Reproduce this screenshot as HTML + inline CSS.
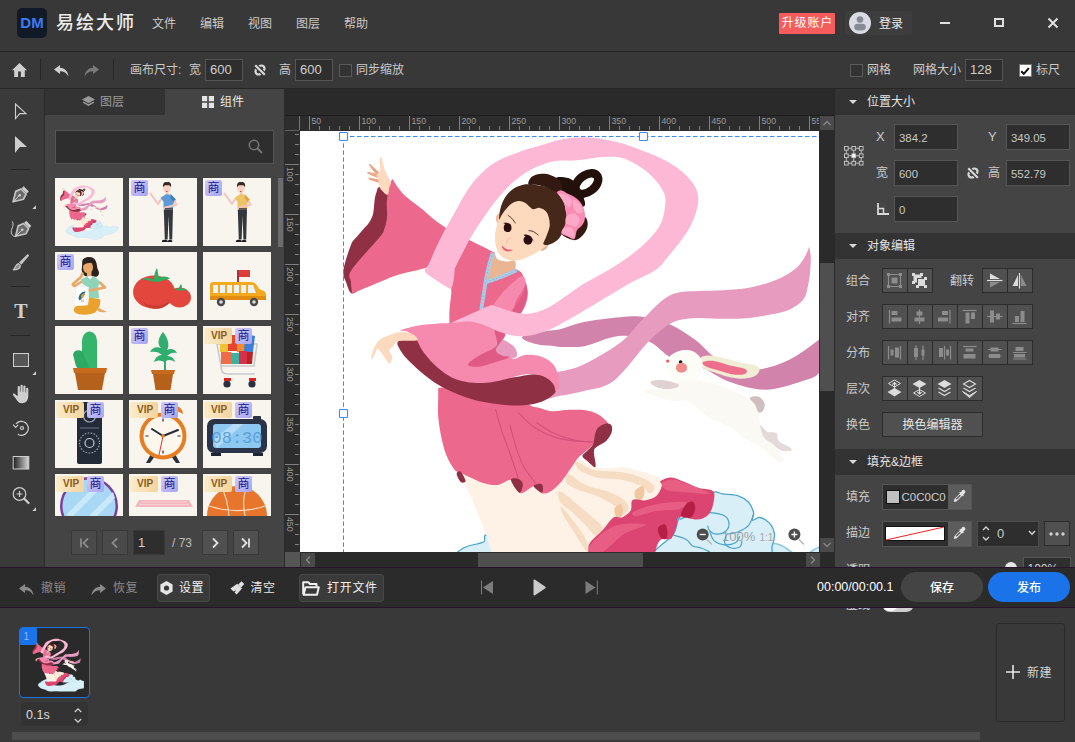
<!DOCTYPE html>
<html lang="zh-CN">
<head>
<meta charset="utf-8">
<title>易绘大师</title>
<style>
*{box-sizing:border-box;margin:0;padding:0}
html,body{width:1075px;height:742px;overflow:hidden;background:#383838}
body{position:relative;font-family:"Liberation Sans","Noto Sans CJK SC",sans-serif;font-size:12px;color:#cacaca;line-height:1}
.abs{position:absolute}
.t{position:absolute;white-space:nowrap;line-height:16px;height:16px}
svg{position:absolute;overflow:visible}
#titlebar{left:0;top:0;width:1075px;height:52px;background:#383838;border-bottom:1px solid #262626}
#toolbar{left:0;top:52px;width:1075px;height:37px;background:#383838;border-bottom:1px solid #262626}
#lefttools{left:0;top:89px;width:45px;height:478px;background:#3a3a3a;border-right:1px solid #2a2a2a}
#panel{left:45px;top:89px;width:240px;height:478px;background:#444}
#canvasarea{left:285px;top:89px;width:550px;height:478px;background:#2a2a2a}
#rightpanel{left:835px;top:89px;width:240px;height:478px;background:#444;z-index:2}
#bottombar{z-index:3;left:0;top:567px;width:1075px;height:41px;background:#2b2b2b;border-top:1px solid #2a1230;border-bottom:1px solid #2a1230}
.bb{letter-spacing:.4px}
#timeline{z-index:1;left:0;top:607px;width:1075px;height:135px;background:#393939}
.inp{position:absolute;background:#2e2e2e;border:1px solid #555;color:#d0d0d0;font-size:13px;line-height:22px;padding-left:4px;white-space:nowrap}
.chk{position:absolute;width:13px;height:13px;border:1px solid #5a5a5a;background:#333}
.btn{position:absolute;background:#505050;border:1px solid #2c2c2c}
.hdr{position:absolute;left:0;width:240px;height:27px;background:#333}
.lbl{position:absolute;white-space:nowrap;line-height:16px;height:16px;color:#d0d0d0}
.thumb{position:absolute;width:68px;height:68px;background:#f8f4ee;overflow:hidden}
.shang{position:absolute;top:2px;width:17px;height:16px;background:linear-gradient(135deg,#cfcbf8,#aaa4ee);border-radius:2px;color:#15158c;font-size:12px;line-height:16px;text-align:center}
.vip{position:absolute;top:2px;left:1px;width:28px;height:16px;background:linear-gradient(90deg,#fbeccd,#f3d49b);border-radius:2px;color:#8a5a20;font-size:10px;font-weight:bold;line-height:16px;padding-left:7px;text-align:left}
</style>
</head>
<body>
<div id="titlebar" class="abs">
<div class="abs" style="left:17px;top:8px;width:30px;height:30px;background:#111a26;border-radius:5px"></div>
<div class="t" style="left:17px;top:15px;width:30px;text-align:center;font-weight:bold;font-size:15px;color:#3b7cf0">DM</div>
<div class="t" style="left:56px;top:13px;font-size:18px;line-height:20px;height:20px;letter-spacing:2px;font-weight:500;color:#ececec">易绘大师</div>
<div class="t" style="left:152px;top:16px">文件</div>
<div class="t" style="left:200px;top:16px">编辑</div>
<div class="t" style="left:248px;top:16px">视图</div>
<div class="t" style="left:296px;top:16px">图层</div>
<div class="t" style="left:344px;top:16px">帮助</div>
<div class="abs" style="left:779px;top:13px;width:56px;height:21px;background:#f65c5c;border-radius:1px"></div>
<div class="t" style="left:779px;top:15px;width:56px;text-align:center;color:#fff;letter-spacing:.8px;text-indent:.8px">升级账户</div>
<div class="abs" style="left:845px;top:11px;width:67px;height:24px;background:#3d3d3d;border-radius:2px"></div>
<svg style="left:849px;top:12px" width="22" height="22" viewBox="0 0 22 22"><circle cx="11" cy="11" r="11" fill="#d9dce3"/><circle cx="11" cy="7.600" r="3.300" fill="#878b94"/><rect x="5.200" y="11.800" width="11.600" height="6.600" rx="3.300" fill="#878b94"/></svg>
<div class="t" style="left:879px;top:16px;color:#ececec">登录</div>
<svg style="left:940px;top:22px" width="10" height="2"><rect width="10" height="2" fill="#e0e0e0"/></svg>
<svg style="left:994px;top:18px" width="10" height="9"><rect x="1" y="1" width="8" height="7" fill="none" stroke="#e0e0e0" stroke-width="2"/></svg>
<svg style="left:1048px;top:18px" width="10" height="10"><path d="M0.5 0.5L9.5 9.5M9.5 0.5L0.5 9.5" stroke="#e0e0e0" stroke-width="2" fill="none"/></svg>
</div>
<div id="toolbar" class="abs">
<svg style="left:12px;top:11px" width="15" height="14" viewBox="0 0 15 14"><path d="M7.5 0L15 7.3H12.8V14H8.9V8.6H6.1V14H2.2V7.3H0z" fill="#cfcfcf"/></svg>
<div class="abs" style="left:40px;top:7px;width:1px;height:21px;background:#262626"></div>
<svg style="left:54px;top:13px" width="15" height="12" viewBox="0 0 15 12"><path d="M6 0L0 4.5L6 9V6.3C10 6.3 12.5 8 14.5 11.5C14 6.5 11 3.2 6 2.8z" fill="#cfcfcf"/></svg>
<svg style="left:84px;top:13px" width="15" height="12" viewBox="0 0 15 12"><path d="M9 0L15 4.5L9 9V6.3C5 6.3 2.5 8 0.5 11.5C1 6.5 4 3.2 9 2.8z" fill="#7a7a7a"/></svg>
<div class="abs" style="left:113px;top:7px;width:1px;height:21px;background:#262626"></div>
<div class="t" style="left:130px;top:10px">画布尺寸:</div>
<div class="t" style="left:189px;top:10px">宽</div>
<div class="inp" style="left:205px;top:7px;width:38px;height:22px;line-height:20px">600</div>
<svg style="left:253px;top:11px" width="14" height="14" viewBox="0 0 14 14"><g fill="none" stroke="#d8d8d8" stroke-width="2.2"><path d="M6.2 3.4A3.1 3.1 0 1 1 10.6 7.8"/><path d="M7.8 10.6A3.1 3.1 0 1 1 3.4 6.2"/></g><path d="M2 2L12 12" stroke="#383838" stroke-width="4.2"/><path d="M2.2 2.2L11.8 11.8" stroke="#d8d8d8" stroke-width="2.2"/></svg>
<div class="t" style="left:279px;top:10px">高</div>
<div class="inp" style="left:295px;top:7px;width:38px;height:22px;line-height:20px">600</div>
<div class="chk" style="left:339px;top:12px;width:13px;height:13px"></div>
<div class="t" style="left:356px;top:10px">同步缩放</div>
<div class="chk" style="left:849.500px;top:12px"></div>
<div class="t" style="left:867px;top:10px">网格</div>
<div class="t" style="left:913px;top:10px">网格大小</div>
<div class="inp" style="left:965px;top:7px;width:38px;height:22px;line-height:20px">128</div>
<div class="chk" style="left:1018.500px;top:12px;background:#fff;border-color:#767676"></div>
<svg style="left:1018px;top:11.500px" width="14" height="14" viewBox="0 0 14 14"><path d="M3.200 7.200L5.800 9.800L10.800 4.200" fill="none" stroke="#111" stroke-width="2"/></svg>
<div class="t" style="left:1036px;top:10px">标尺</div>
</div>
<div id="lefttools" class="abs">
<svg style="left:0;top:0" width="44" height="478" viewBox="0 89 44 478">
<path d="M15.5 104L26 113.6H19.8L15.5 118.6z" fill="none" stroke="#cfcfcf" stroke-width="1.1"/>
<path d="M15 136L27 147H19.8L15 153z" fill="#cfcfcf"/>
<rect x="10.5" y="169" width="20" height="1" fill="#262626"/>
<g transform="translate(12.5,186)"><path d="M11.2 0.3L16.3 5.4L14.3 7.4L9.2 2.3z" fill="#cfcfcf"/><path d="M8.6 3L13.6 8L11 13.2L0.6 15.8L3.2 5.4z" fill="#6a6a6a" stroke="#c4c4c4" stroke-width="1.700" stroke-linejoin="round"/><path d="M0.8 15.6L6.6 9.8" stroke="#cfcfcf" stroke-width="1"/><circle cx="7.2" cy="9.2" r="1.3" fill="#cfcfcf"/></g>
<path d="M36 205.3V209H32.3z" fill="#cfcfcf"/>
<g transform="translate(15,220.5)"><path d="M11.2 0.3L16.3 5.4L14.3 7.4L9.2 2.3z" fill="#cfcfcf"/><path d="M8.6 3L13.6 8L11 13.2L0.6 15.8L3.2 5.4z" fill="#6a6a6a" stroke="#c4c4c4" stroke-width="1.700" stroke-linejoin="round"/><path d="M0.8 15.6L6.6 9.8" stroke="#cfcfcf" stroke-width="1"/><circle cx="7.2" cy="9.2" r="1.3" fill="#cfcfcf"/></g>
<path d="M12.5 221.5C14.5 227 10 229 11.5 233.5C12.3 236 14 236.5 15 236.3" fill="none" stroke="#cfcfcf" stroke-width="1"/>
<g transform="translate(13,254)"><path d="M14.600 0L16.200 1.600L8.400 10.800L6 8.400z" fill="#c4c4c4"/><path d="M5.400 9.600L7.400 11.600C7.200 14 4.500 15.800 0.300 15.800C2.500 14.500 2.200 10.200 5.400 9.600z" fill="#8a8a8a" stroke="#c4c4c4" stroke-width="1.300" stroke-linejoin="round"/></g>
<rect x="10.5" y="286" width="20" height="1" fill="#262626"/>
<text x="21" y="318" text-anchor="middle" font-family="Liberation Serif,serif" font-weight="bold" font-size="20" fill="#cfcfcf">T</text>
<rect x="10.5" y="335" width="20" height="1" fill="#262626"/>
<rect x="13.5" y="353.5" width="15" height="13" fill="#565656" stroke="#cfcfcf" stroke-width="1"/>
<path d="M36 371.3V375H32.3z" fill="#cfcfcf"/>
<g transform="translate(12.7,384.8)" fill="#cfcfcf"><path d="M5 7.5V2.2a1.1 1.1 0 0 1 2.2 0V7h0.6V1.1a1.1 1.1 0 0 1 2.2 0V7h0.6V1.8a1.1 1.1 0 0 1 2.2 0V7.6h0.6V4a1.1 1.1 0 0 1 2.2 0V11c0 4.5-2.4 7.5-6.2 7.5c-3 0-4.4-1.4-6-4.2L0.3 10.2c-0.5-1 0.8-2 1.8-1L5 11.5z"/></g>
<g fill="none" stroke="#cfcfcf" stroke-width="1.2"><path d="M16 423.8A7 7 0 1 1 17.8 434.3"/><path d="M13.2 424.6L15.6 427.4L18.2 424.8" stroke-width="1.1"/><circle cx="22" cy="428" r="1.5"/></g>
<defs><linearGradient id="lg1" x1="0" x2="1" y1="0" y2="0"><stop offset="0" stop-color="#1e1e1e"/><stop offset="1" stop-color="#d8d8d8"/></linearGradient></defs>
<rect x="13.2" y="456.5" width="15.6" height="12.5" fill="url(#lg1)" stroke="#cfcfcf" stroke-width="1"/>
<circle cx="19.5" cy="494" r="6.3" fill="none" stroke="#cfcfcf" stroke-width="1.2"/>
<path d="M16.5 494H22.5M19.5 491V497" stroke="#cfcfcf" stroke-width="1.2"/>
<path d="M24.3 498.8L28.5 503" stroke="#cfcfcf" stroke-width="2.2" stroke-linecap="round"/>
<path d="M36 507.3V511H32.3z" fill="#cfcfcf"/>
</svg>
</div>
<div id="panel" class="abs"><div class="abs" style="left:239px;top:0;width:1px;height:478px;background:#2a2a2a"></div>
<div class="abs" style="left:0;top:0;width:120px;height:26px;background:#333"></div>
<svg style="left:37px;top:7px" width="13" height="12" viewBox="0 0 13 12"><path d="M6.500 0L13 3.600L6.500 7.200L0 3.600z" fill="#9a9a9a"/><path d="M1.200 6.200L6.500 9.200L11.800 6.200" fill="none" stroke="#9a9a9a" stroke-width="1.500"/></svg>
<div class="t" style="left:55px;top:5px;color:#9a9a9a">图层</div>
<svg style="left:157px;top:7px" width="12" height="12" viewBox="0 0 12 12"><path d="M0 0h5.200v5.200h-5.200zM6.800 0h5.200v5.200h-5.200zM0 6.800h5.200v5.200h-5.200zM6.800 6.800h5.200v5.200h-5.200z" fill="#e4e4e4"/></svg>
<div class="t" style="left:175px;top:5px;color:#e8e8e8">组件</div>
<div class="abs" style="left:10px;top:41px;width:219px;height:34px;background:#2e2e2e;border:1px solid #555"></div>
<svg style="left:203px;top:50px" width="15" height="15" viewBox="0 0 15 15"><circle cx="6" cy="6" r="4.700" fill="none" stroke="#777" stroke-width="1.500"/><path d="M9.500 9.500L13.500 13.500" stroke="#777" stroke-width="1.800" stroke-linecap="round"/></svg>
<div class="abs" style="left:0;top:89px;width:240px;height:338px;overflow:hidden">
<div class="thumb" style="left:10px;top:0px"><svg width="68" height="68" viewBox="0 0 68 68"><use href="#art" transform="translate(-28.660,-5.900) scale(0.098)"/></svg></div>
<div class="thumb" style="left:84px;top:0px"><svg width="68" height="68" viewBox="0 0 68 68"><path d="M31.800 21.500L29 26L21.500 15.500" fill="none" stroke="#f6c4bc" stroke-width="2" stroke-linecap="round" stroke-linejoin="round"/><rect x="36.800" y="13" width="2.600" height="5" fill="#f2c0b2"/><path d="M31.600 19.700L36.500 16.600H42.200L46.700 21.500L44.500 25L44 30.400H34.400L34.600 24z" fill="#5a9bd5"/><path d="M42.200 16.800L46.700 21.500L45 24.500L41.500 20z" fill="#3d7fb5"/><path d="M45.800 23.500L47.600 26.800L35.500 29.800" fill="none" stroke="#f6c4bc" stroke-width="2" stroke-linecap="round" stroke-linejoin="round"/><ellipse cx="38" cy="10.300" rx="3.700" ry="4.700" fill="#f8d2c2"/><path d="M34 9.500C33.500 4 37 3.600 38.200 4.200C40 3.400 43 4.800 42 9.500C41.500 7.500 40.500 7 38 7.200C36 7 34.800 7.500 34 9.500z" fill="#3a2a24"/><circle cx="37.800" cy="13.400" r="0.700" fill="#c33"/><rect x="36" y="30.300" width="8" height="1.200" fill="#1c1c1e"/><path d="M34.800 31.400H44L43.200 61.500H40.400L39.600 38L38.600 61.500H35.800z" fill="#34373c"/><path d="M33 62.800C34 61.600 37 61.600 38.600 62.400V64H33zM38.800 62.800C39.800 61.600 42 61.600 43.200 62.400V64H38.800z" fill="#1c1c1e"/></svg><div class="shang" style="left:2px">商</div></div>
<div class="thumb" style="left:158px;top:0px"><svg width="68" height="68" viewBox="0 0 68 68"><path d="M31.800 21.500L29 26L21.500 15.500" fill="none" stroke="#f6c4bc" stroke-width="2" stroke-linecap="round" stroke-linejoin="round"/><rect x="36.800" y="13" width="2.600" height="5" fill="#f2c0b2"/><path d="M31.600 19.700L36.500 16.600H42.200L46.700 21.500L44.500 25L44 30.400H34.400L34.600 24z" fill="#eec468"/><path d="M42.200 16.800L46.700 21.500L45 24.500L41.500 20z" fill="#d9a548"/><path d="M45.800 23.500L47.600 26.800L35.500 29.800" fill="none" stroke="#f6c4bc" stroke-width="2" stroke-linecap="round" stroke-linejoin="round"/><ellipse cx="38" cy="10.300" rx="3.700" ry="4.700" fill="#f8d2c2"/><path d="M34 9.500C33.500 4 37 3.600 38.200 4.200C40 3.400 43 4.800 42 9.500C41.500 7.500 40.500 7 38 7.200C36 7 34.800 7.500 34 9.500z" fill="#3a2a24"/><circle cx="37.800" cy="13.400" r="0.700" fill="#c33"/><rect x="36" y="30.300" width="8" height="1.200" fill="#1c1c1e"/><path d="M34.800 31.400H44L43.200 61.500H40.400L39.600 38L38.600 61.500H35.800z" fill="#34373c"/><path d="M33 62.800C34 61.600 37 61.600 38.600 62.400V64H33zM38.800 62.800C39.800 61.600 42 61.600 43.200 62.400V64H38.800z" fill="#1c1c1e"/></svg><div class="shang" style="left:2px">商</div></div>
<div class="thumb" style="left:10px;top:74px"><svg width="68" height="68" viewBox="0 0 68 68"><path d="M27.300 9C28 4.500 38 3 40.500 8.500C42.500 12 41.500 16 43.500 19C45 22 43 25 40 24.800L30 24C27.500 22 26 18 27 15z" fill="#2b2220"/><ellipse cx="33" cy="15.400" rx="5" ry="6" fill="#e8a868"/><path d="M28 12C29 8.500 34 7.500 38.500 11C36 10.500 31 10.800 28 13.500z" fill="#2b2220"/><rect x="32" y="20" width="4.500" height="5" fill="#e8a868"/><path d="M27.500 21.500L26 25L18.500 31.500C17 33 18.500 34.500 20.500 33.500L27 29.500" fill="none" stroke="#e8a868" stroke-width="2.600" stroke-linecap="round" stroke-linejoin="round"/><path d="M25.700 27.500L32 24.500L35 27L38.500 23.800L45.800 30.200L43 34.500L44 46H34L33.500 36L28 32z" fill="#8fd3b8"/><path d="M32.500 24.300L35 27.500L38 24z" fill="#fff"/><path d="M45.500 31L50 35.500L35 38.500" fill="none" stroke="#e8a868" stroke-width="2.600" stroke-linecap="round" stroke-linejoin="round"/><path d="M34 45.500L45 47C46 52 44 57 40 60.500C34 63.500 24 63.500 20 60.500C18 58 19 55 22 54L33 53z" fill="#eba22c"/><path d="M43.500 55.500C46 57.500 49 58.800 51.800 59.400C50 60.500 46 60.500 42.500 59z" fill="#e8a868"/><path d="M21.500 34.800H33.500L31.600 53.200H18.800z" fill="#fff" stroke="#ddd" stroke-width=".4"/><path d="M23.500 46.500C24 42 27 39 30.500 39.500C29.500 43 27 47 24.500 48.500z" fill="#2a6f8a"/><path d="M26 44C27 42 29 41 30 41.500C29.500 44 28 46 26.500 46.500z" fill="#e8952c"/><path d="M26.500 47.500L27 50.500M28 47L28.500 50" stroke="#d55" stroke-width=".5"/></svg><div class="shang" style="left:2px">商</div></div>
<div class="thumb" style="left:84px;top:74px"><svg width="68" height="68" viewBox="0 0 68 68"><ellipse cx="25" cy="40" rx="21" ry="16.5" fill="#e2463c"/><path d="M14 50c8 6 22 5 28-3c-4 12-22 13-28 3z" fill="#c93a32"/><ellipse cx="50.5" cy="45.5" rx="11.5" ry="10" fill="#e2463c"/><path d="M13 27c5-2 9-1 12 1c0-5 1-9 3-12c1 3 1 7 2 10c4-2 8-2 11 1c-5 0-8 2-11 3c-6 0-11-2-17-3z" fill="#2fae62"/><path d="M45 37c2-1 4-1 5 0c0-2 1-4 2-5c1 2 1 3 1 5c2-1 4 0 5 1c-5 1-8 1-13-1z" fill="#2fae62"/></svg></div>
<div class="thumb" style="left:158px;top:74px"><svg width="68" height="68" viewBox="0 0 68 68"><path d="M34 18h2v12h-2z" fill="#a33"/><path d="M36 18h11v7h-11z" fill="#dc3c3c"/><path d="M7 33c0-2 1-3 3-3h38c4 0 6 3 8 7l5 2c2 1 2 3 2 5v4h-56z" fill="#f4a91f"/><path d="M7 44h56v4h-56z" fill="#e08d12"/><path d="M10 33h5v8h-5zM17 33h5v8h-5zM24 33h5v8h-5zM31 33h5v8h-5zM38 33h5v8h-5zM45 33h5l3 8h-8z" fill="#e7f3f7"/><circle cx="18" cy="50" r="4.2" fill="#4a4a4a"/><circle cx="18" cy="50" r="1.8" fill="#ddd"/><circle cx="51" cy="50" r="4.2" fill="#4a4a4a"/><circle cx="51" cy="50" r="1.8" fill="#ddd"/></svg></div>
<div class="thumb" style="left:10px;top:148px"><svg width="68" height="68" viewBox="0 0 68 68"><path d="M27 16c0-14 15-14 15 0v28h-15z" fill="#35b56c"/><path d="M19 32c-4-8 8-11 10-3l5 12l-8 4c-5-2-6-8-7-13z" fill="#2ea862"/><path d="M18 42h34l-1 5h-32z" fill="#c76a1e"/><path d="M20 47h30l-3 17h-24z" fill="#b5601b"/></svg></div>
<div class="thumb" style="left:84px;top:148px"><svg width="68" height="68" viewBox="0 0 68 68"><path d="M34 6c-5 6-6 12-2 16c-5-2-9 0-11 4c5-1 9 0 12 3c-4 0-7 3-8 7c4-2 7-2 10 0v8h2v-9c3-2 6-1 9 1c-1-4-4-6-8-6c3-3 6-4 10-3c-2-4-6-5-10-3c3-5 1-12-4-18z" fill="#2fae70"/><path d="M22 44h24l-1 4h-22z" fill="#c76a1e"/><path d="M24 48h20l-2.500 16h-15z" fill="#b5601b"/></svg><div class="shang" style="left:2px">商</div></div>
<div class="thumb" style="left:158px;top:148px"><svg width="68" height="68" viewBox="0 0 68 68"><path d="M14 18h40l-3 22h-33z" fill="none" stroke="#c9c9cf" stroke-width="1.6"/><path d="M17 12h8v14h-8z" fill="#f2c230"/><path d="M25 9h9v16h-9z" fill="#e8452f"/><path d="M34 13h8v13h-8z" fill="#f58b2a"/><path d="M42 8l10 2l-2 16h-9z" fill="#3d7fd6"/><path d="M18 26h10v12h-10z" fill="#ef6b4a"/><path d="M28 27h8v11h-8z" fill="#3ab3a0"/><path d="M36 25h8v13h-8z" fill="#d8304a"/><path d="M44 26h6l-1 12h-5z" fill="#b22"/><path d="M18 40c0 6 2 8 6 8h28" fill="none" stroke="#c9c9cf" stroke-width="1.6"/><circle cx="24" cy="58" r="3.6" fill="#2b3040"/><circle cx="49" cy="58" r="3.6" fill="#2b3040"/><path d="M21 52h7v3h-7zM46 52h7v3h-7z" fill="#d22"/></svg><div class="vip">VIP</div><div class="shang" style="left:32px">商</div></div>
<div class="thumb" style="left:10px;top:222px"><svg width="68" height="68" viewBox="0 0 68 68"><rect x="22" y="2" width="25" height="62" rx="2" fill="#232b38"/><circle cx="34.500" cy="16" r="6" fill="none" stroke="#9aa4b5" stroke-width="1.2"/><circle cx="34.500" cy="43" r="10" fill="none" stroke="#9aa4b5" stroke-width="1.2" stroke-dasharray="1.5 1.500"/><circle cx="34.500" cy="43" r="4.500" fill="none" stroke="#c4ccd8" stroke-width="1.200"/><path d="M25 28h19" stroke="#6a7486" stroke-width="1"/></svg><div class="vip">VIP</div><div class="shang" style="left:32px">商</div></div>
<div class="thumb" style="left:84px;top:222px"><svg width="68" height="68" viewBox="0 0 68 68"><path d="M14 14a9 9 0 0 1 14-7zM54 14a9 9 0 0 0-14-7z" fill="#e77d22"/><path d="M22 54l-5 9h4l5-7zM46 54l5 9h-4l-5-7z" fill="#2b3040"/><circle cx="34" cy="36" r="23.500" fill="#e77d22"/><circle cx="34" cy="36" r="19.500" fill="#fdf6ec"/><path d="M34 36l-11-7M34 36l15-6" stroke="#222b3a" stroke-width="2" stroke-linecap="round"/><path d="M34 36l-4 19" stroke="#e33" stroke-width="1"/><g stroke="#222b3a" stroke-width="1.200"><path d="M34 18.500v3M34 50.500v3M16.500 36h3M48.500 36h3"/></g><circle cx="34" cy="36" r="1.800" fill="#e77d22"/></svg><div class="vip">VIP</div><div class="shang" style="left:32px">商</div></div>
<div class="thumb" style="left:158px;top:222px"><svg width="68" height="68" viewBox="0 0 68 68"><rect x="50" y="16" width="8" height="6" rx="1" fill="#2b3446"/><rect x="4" y="19" width="60" height="34" rx="7" fill="#2b3446"/><rect x="10" y="24" width="48" height="24" rx="3" fill="#8cc8f2"/><path d="M10 40l20-16h10l-26 24z" fill="#b4dcf8"/><text x="34" y="43" text-anchor="middle" font-family="Liberation Mono,monospace" font-size="17" fill="#5d9fd4">08:30</text><path d="M8 53h10v3h-10zM50 53h10v3h-10z" fill="#1e2533"/></svg><div class="vip">VIP</div><div class="shang" style="left:32px">商</div></div>
<div class="thumb" style="left:10px;top:296px"><svg width="68" height="68" viewBox="0 0 68 68"><circle cx="34" cy="32" r="29" fill="#7a3f9a"/><circle cx="34" cy="32" r="26.500" fill="#a9d8f4"/><path d="M12 40l30-30h8l-36 36zM24 52l34-34l2 6l-30 30z" fill="#c9e8fa"/></svg><div class="vip">VIP</div><div class="shang" style="left:32px">商</div></div>
<div class="thumb" style="left:84px;top:296px"><svg width="68" height="68" viewBox="0 0 68 68"><path d="M10 26h50l4 7h-58z" fill="#f4b6bf"/><path d="M12 28h46M10 30.500h50" stroke="#f9d3d8" stroke-width=".8"/></svg><div class="vip">VIP</div><div class="shang" style="left:32px">商</div></div>
<div class="thumb" style="left:158px;top:296px"><svg width="68" height="68" viewBox="0 0 68 68"><circle cx="34" cy="42" r="30" fill="#e7762c"/><path d="M6 32c18 6 38 6 56 0M20 16c6 14 8 30 4 50M44 14c-6 10-4 36 8 48" fill="none" stroke="#f6d9c0" stroke-width="1.200"/></svg><div class="vip">VIP</div><div class="shang" style="left:32px">商</div></div>
</div>
<div class="abs" style="left:233px;top:89px;width:5px;height:69px;background:#6c6c6c"></div>
<div class="btn" style="left:26px;top:440.500px;width:26px;height:25px;background:#4a4a4a;border-color:#383838"><svg style="left:6px;top:6px" width="12" height="12" viewBox="0 0 12 12"><path d="M3 1.500V10.500M10 1.500L5.500 6L10 10.500" fill="none" stroke="#8a8a8a" stroke-width="1.800"/></svg></div>
<div class="btn" style="left:57px;top:440.500px;width:26px;height:25px;background:#4a4a4a;border-color:#383838"><svg style="left:6px;top:6px" width="12" height="12" viewBox="0 0 12 12"><path d="M8 1.500L3.500 6L8 10.500" fill="none" stroke="#8a8a8a" stroke-width="1.800"/></svg></div>
<div class="inp" style="left:88px;top:440.500px;width:32px;height:25px;line-height:23px;border-color:#383838;background:#2e2e2e">1</div>
<div class="t" style="left:127px;top:445.500px;color:#bdbdbd">/ 73</div>
<div class="btn" style="left:157px;top:440.500px;width:26px;height:25px;background:#505050;border-color:#383838"><svg style="left:6px;top:6px" width="12" height="12" viewBox="0 0 12 12"><path d="M4 1.500L8.500 6L4 10.500" fill="none" stroke="#e0e0e0" stroke-width="1.800"/></svg></div>
<div class="btn" style="left:188px;top:440.500px;width:26px;height:25px;background:#505050;border-color:#383838"><svg style="left:6px;top:6px" width="12" height="12" viewBox="0 0 12 12"><path d="M9 1.500V10.500M2 1.500L6.500 6L2 10.500" fill="none" stroke="#e0e0e0" stroke-width="1.800"/></svg></div>
</div>
<div id="canvasarea" class="abs">
<svg style="left:0;top:0" width="550" height="478" viewBox="285 89 550 478">
<defs><clipPath id="cv"><rect x="300" y="131" width="519" height="421"/></clipPath><clipPath id="hr"><rect x="300" y="115" width="519" height="16"/></clipPath><clipPath id="vr"><rect x="285" y="131" width="15" height="421"/></clipPath></defs>
<rect x="285" y="115" width="535" height="16" fill="#2d2d2d"/><rect x="285" y="115" width="550" height="1" fill="#1d1d1d"/>
<rect x="285" y="131" width="15" height="421" fill="#2d2d2d"/>
<g fill="#808080" clip-path="url(#hr)"><rect x="309" y="116" width="1" height="14"/><rect x="319" y="126" width="1" height="4"/><rect x="329" y="126" width="1" height="4"/><rect x="339" y="126" width="1" height="4"/><rect x="349" y="126" width="1" height="4"/><rect x="359" y="116" width="1" height="14"/><rect x="369" y="126" width="1" height="4"/><rect x="379" y="126" width="1" height="4"/><rect x="389" y="126" width="1" height="4"/><rect x="399" y="126" width="1" height="4"/><rect x="409" y="116" width="1" height="14"/><rect x="419" y="126" width="1" height="4"/><rect x="429" y="126" width="1" height="4"/><rect x="439" y="126" width="1" height="4"/><rect x="449" y="126" width="1" height="4"/><rect x="459" y="116" width="1" height="14"/><rect x="469" y="126" width="1" height="4"/><rect x="479" y="126" width="1" height="4"/><rect x="489" y="126" width="1" height="4"/><rect x="499" y="126" width="1" height="4"/><rect x="509" y="116" width="1" height="14"/><rect x="519" y="126" width="1" height="4"/><rect x="529" y="126" width="1" height="4"/><rect x="539" y="126" width="1" height="4"/><rect x="549" y="126" width="1" height="4"/><rect x="559" y="116" width="1" height="14"/><rect x="569" y="126" width="1" height="4"/><rect x="579" y="126" width="1" height="4"/><rect x="589" y="126" width="1" height="4"/><rect x="599" y="126" width="1" height="4"/><rect x="609" y="116" width="1" height="14"/><rect x="619" y="126" width="1" height="4"/><rect x="629" y="126" width="1" height="4"/><rect x="639" y="126" width="1" height="4"/><rect x="649" y="126" width="1" height="4"/><rect x="659" y="116" width="1" height="14"/><rect x="669" y="126" width="1" height="4"/><rect x="679" y="126" width="1" height="4"/><rect x="689" y="126" width="1" height="4"/><rect x="699" y="126" width="1" height="4"/><rect x="709" y="116" width="1" height="14"/><rect x="719" y="126" width="1" height="4"/><rect x="729" y="126" width="1" height="4"/><rect x="739" y="126" width="1" height="4"/><rect x="749" y="126" width="1" height="4"/><rect x="759" y="116" width="1" height="14"/><rect x="769" y="126" width="1" height="4"/><rect x="779" y="126" width="1" height="4"/><rect x="789" y="126" width="1" height="4"/><rect x="799" y="126" width="1" height="4"/><rect x="809" y="116" width="1" height="14"/><rect x="819" y="126" width="1" height="4"/></g>
<rect x="299" y="116" width="1" height="14" fill="#777"/>
<rect x="285" y="130" width="14" height="1" fill="#5e5e5e"/>
<g fill="#808080"><rect x="295" y="134" width="4" height="1"/><rect x="295" y="144" width="4" height="1"/><rect x="295" y="154" width="4" height="1"/><rect x="285" y="164" width="14" height="1"/><rect x="295" y="174" width="4" height="1"/><rect x="295" y="184" width="4" height="1"/><rect x="295" y="194" width="4" height="1"/><rect x="295" y="204" width="4" height="1"/><rect x="285" y="214" width="14" height="1"/><rect x="295" y="224" width="4" height="1"/><rect x="295" y="234" width="4" height="1"/><rect x="295" y="244" width="4" height="1"/><rect x="295" y="254" width="4" height="1"/><rect x="285" y="264" width="14" height="1"/><rect x="295" y="274" width="4" height="1"/><rect x="295" y="284" width="4" height="1"/><rect x="295" y="294" width="4" height="1"/><rect x="295" y="304" width="4" height="1"/><rect x="285" y="314" width="14" height="1"/><rect x="295" y="324" width="4" height="1"/><rect x="295" y="334" width="4" height="1"/><rect x="295" y="344" width="4" height="1"/><rect x="295" y="354" width="4" height="1"/><rect x="285" y="364" width="14" height="1"/><rect x="295" y="374" width="4" height="1"/><rect x="295" y="384" width="4" height="1"/><rect x="295" y="394" width="4" height="1"/><rect x="295" y="404" width="4" height="1"/><rect x="285" y="414" width="14" height="1"/><rect x="295" y="424" width="4" height="1"/><rect x="295" y="434" width="4" height="1"/><rect x="295" y="444" width="4" height="1"/><rect x="295" y="454" width="4" height="1"/><rect x="285" y="464" width="14" height="1"/><rect x="295" y="474" width="4" height="1"/><rect x="295" y="484" width="4" height="1"/><rect x="295" y="494" width="4" height="1"/><rect x="295" y="504" width="4" height="1"/><rect x="285" y="514" width="14" height="1"/><rect x="295" y="524" width="4" height="1"/><rect x="295" y="534" width="4" height="1"/><rect x="295" y="544" width="4" height="1"/></g>
<g fill="#9c9c9c" font-size="8.700" font-family="Liberation Sans,sans-serif" clip-path="url(#hr)"><text x="311.5" y="124.200">50</text><text x="361.5" y="124.200">100</text><text x="411.5" y="124.200">150</text><text x="461.5" y="124.200">200</text><text x="511.5" y="124.200">250</text><text x="561.5" y="124.200">300</text><text x="611.5" y="124.200">350</text><text x="661.5" y="124.200">400</text><text x="711.5" y="124.200">450</text><text x="761.5" y="124.200">500</text><text x="811.5" y="124.200">550</text></g>
<g fill="#9c9c9c" font-size="8.700" font-family="Liberation Sans,sans-serif" clip-path="url(#vr)"><text transform="translate(286.800,167) rotate(90)">100</text><text transform="translate(286.800,217) rotate(90)">150</text><text transform="translate(286.800,267) rotate(90)">200</text><text transform="translate(286.800,317) rotate(90)">250</text><text transform="translate(286.800,367) rotate(90)">300</text><text transform="translate(286.800,417) rotate(90)">350</text><text transform="translate(286.800,467) rotate(90)">400</text><text transform="translate(286.800,517) rotate(90)">450</text></g>
<rect x="300" y="131" width="519" height="421" fill="#fff"/>
<g clip-path="url(#cv)" id="artwrap"><!--ART--><g id="art"><path d="M402 604C398.3 596.2 403.7 590.3 408 585C412.3 579.7 422.7 576.2 428 572C433.3 567.8 434.8 563 440 560C445.2 557 449 553.7 459 554C469 554.3 483.2 554.3 500 562C516.8 569.7 535 593.7 560 600C585 606.3 616.7 609.2 650 600C683.3 590.8 735 552.3 760 545C785 537.7 789.7 555.7 800 556C810.3 556.3 813.3 546.3 822 547C830.7 547.7 841.5 559 852 560C862.5 561 870.7 552.7 885 553C899.3 553.3 931.2 554.2 938 562C944.8 569.8 937.3 588.7 926 600C914.7 611.3 891 622.5 870 630C849 637.5 816.7 638.3 800 645C783.3 651.7 786.2 662.5 770 670C753.8 677.5 724.7 689.7 703 690C681.3 690.3 660.5 676.2 640 672C619.5 667.8 600 665.7 580 665C560 664.3 538.3 671.3 520 668C501.7 664.7 485 651 470 645C455 639 441.3 638.8 430 632C418.7 625.2 405.7 611.8 402 604z" fill="#d9eff8" stroke="#8cc8de" stroke-width="1.5"/>
<path d="M480 553C499.7 545.5 581.3 546.8 600 553C618.7 559.2 605.3 580.5 592 590C578.7 599.5 538.3 608.7 520 610C501.7 611.3 488.7 607.5 482 598C475.3 588.5 460.3 560.5 480 553z" fill="#dc4571"/>
<path d="M713 492.4C717.3 490.7 718.5 493.4 722.6 493.9C726.7 494.5 733.3 494.3 737.6 495.6C741.9 497 745.6 499.2 748.3 502C751 504.9 752.9 509.7 753.6 512.7C754.3 515.8 751.5 519.4 752.6 520.2C753.6 521 757.2 516.9 760 517.5C762.9 518 767.3 520.7 769.7 523.4C772.1 526.2 774 530.4 774.4 534.1C774.8 537.9 773.7 541.6 772.2 545.9C770.7 550.2 775.8 555.4 765.4 559.8C755 564.3 729.7 570.5 709.8 572.7C689.8 574.8 654.9 576.1 645.6 572.7C636.3 569.2 649.5 558.3 654.1 551.9C658.8 545.5 669.1 540 673.4 534.1C677.7 528.3 675.9 522 679.8 517C683.7 512 691.4 508.3 696.9 504.2C702.5 500.1 708.7 494.1 713 492.4z" fill="#d9eff8" stroke="#4ba3c7" stroke-width="1.3"/>
<path d="M753.6 513.8C753.6 513.8 751 522.6 748.3 525.6C745.6 528.6 741.1 530.6 737.6 532C734 533.4 726.9 534.1 726.9 534.1" fill="none" stroke="#4ba3c7" stroke-width="1.2"/>
<path d="M679.8 519.6C679.8 519.6 687.7 515 692.7 513.8C697.6 512.7 704.4 512.4 709.8 512.7C715.1 513.1 721.5 514 724.7 516C728 517.9 729 521.8 729 524.5C729 527.2 726.9 530.4 724.7 532C722.6 533.6 718.7 534.3 716.2 534.1C713.7 534 711.2 532.4 709.8 530.9C708.3 529.5 707.6 525.6 707.6 525.6" fill="none" stroke="#4ba3c7" stroke-width="1.2"/>
<path d="M673.4 535.2C673.4 535.2 683 537.7 686.2 539.5C689.4 541.3 690.2 544.5 692.7 545.9C695.1 547.3 698.4 547 701.2 548C704.1 549 709.8 551.9 709.8 551.9" fill="none" stroke="#4ba3c7" stroke-width="1.2"/>
<path d="M709.8 530.9C709.8 530.9 711.6 538.2 714 540.6C716.5 542.9 721.2 544.5 724.7 544.8C728.3 545.2 732.9 544.1 735.4 542.7C737.9 541.3 739.7 536.3 739.7 536.3" fill="none" stroke="#4ba3c7" stroke-width="1.2"/>
<path d="M726.9 534.1C726.9 534.1 724 540.4 724.7 542.7C725.5 545 728.7 547.3 731.2 548C733.7 548.8 737.9 548.2 739.7 547C741.5 545.7 741.9 540.6 741.9 540.6" fill="none" stroke="#4ba3c7" stroke-width="1.2"/>
<path d="M457.7 552C460.4 549.1 463.3 547.9 466.9 546.5C470.5 545.1 476.3 544.3 479.2 543.4C482.1 542.6 483.2 542.7 484.3 541.4C485.4 540 483.5 534.9 485.7 535.2C487.9 535.6 493.2 538.6 497.6 543.4C502 548.2 519.8 560.5 512 563.9C504.1 567.3 459.5 565.9 450.5 563.9C441.4 561.9 454.9 554.9 457.7 552z" fill="#d9eff8" stroke="#4ba3c7" stroke-width="1.2"/>
<path d="M560 329.3C566.4 327.7 574.1 324 584.2 322C594.3 320 610.4 318 620.5 317.2C630.5 316.4 636.2 315.8 644.7 317.2C653.1 318.5 662.8 321.3 671.3 325.1C679.7 329 688.2 334.8 695.4 340.1C702.7 345.5 707.5 352.6 714.8 357.1C722 361.5 731.3 364.7 739 366.7C746.6 368.8 752.3 370.4 760.7 369.2C769.2 368 779.9 364.5 789.8 359.5C799.6 354.4 814 343.4 820 338.9C826 334.4 824.4 331.8 825.6 332.4C826.7 333 827.9 336 827 342.6C826.1 349.1 824.2 365.1 820 371.6C815.8 378 810.9 378.2 801.9 381.3C792.8 384.3 777.7 389.6 765.6 389.7C753.5 389.8 739.8 385.4 729.3 381.7C718.8 378.1 710.8 371.1 702.7 368C694.6 364.8 687 365.3 680.9 363.1C674.9 360.9 671.7 358.2 666.4 354.7C661.2 351.1 656.3 345 649.5 341.8C642.6 338.7 632.2 336.4 625.3 335.8C618.4 335.2 615.2 336.5 608.4 338.2C601.5 339.9 592.2 344.7 584.2 346.2C576.1 347.6 564.8 346.9 560 346.9C555.2 346.9 559.4 346.8 555.3 346.3C551.3 345.8 541.3 345.7 535.8 344.1C530.3 342.6 520.5 339.1 522.1 336.9C523.8 334.8 539.3 332.5 545.6 331.3C551.9 330 553.6 330.8 560 329.3z" fill="#d283ab"/>
<path d="M809.1 246.7C809.1 246.7 807.4 252 805.8 255.1C804.1 258.2 802.1 262 799.1 265.2C796 268.4 792.1 271.6 787.3 274.4C782.6 277.2 777 279.7 770.6 281.9C764.2 284.1 756.7 286.4 748.8 287.8C741 289.2 732.1 289.7 723.7 290.3C715.3 290.8 705.6 290.8 698.6 291.1C691.6 291.4 686.6 291.3 681.9 292C677.1 292.7 674 293.3 670.1 295.3C666.2 297.3 662 300.6 658.4 303.7C654.8 306.7 651.4 310.7 648.4 313.7C645.3 316.8 644.7 317.3 640 322.1C635.3 326.9 629.8 335.5 620.5 342.6C611.2 349.6 594.3 359.5 584.2 364.3C574.1 369.2 567.7 369.9 560 371.6C552.3 373.3 541.9 370 538.2 374.5C534.6 379 534.6 395.1 538.2 398.7C541.9 402.2 552.3 397.1 560 395.8C567.7 394.5 575.3 393.3 584.2 390.9C593.1 388.5 603.1 388.8 613.2 381.3C623.3 373.7 637.8 353.4 645 345.5C652.3 337.6 652.6 337.4 656.7 333.8C660.9 330.2 666 326.1 670.1 323.8C674.3 321.4 677.1 320.6 681.9 319.6C686.6 318.6 691.6 318 698.6 317.9C705.6 317.8 715.3 318.7 723.7 318.7C732.1 318.7 741 318.6 748.8 317.9C756.7 317.2 764.2 315.8 770.6 314.6C777 313.3 782.6 312.2 787.3 310.4C792.1 308.6 796.1 305.9 799.1 303.7C802 301.4 803.5 299.5 804.9 297C806.3 294.5 806.6 292.5 807.4 288.6C808.3 284.7 809.4 278.8 810 273.5C810.5 268.2 810.9 261.3 810.8 256.8C810.7 252.3 809.1 246.7 809.1 246.7z" fill="#e79bbf"/>
<path d="M677.2 380.9C680.3 379.7 689.7 378.9 696 379.4C702.3 380 708.3 382.2 714.9 384.3C721.5 386.5 729.7 389.5 735.7 392.3C741.6 395 747 397.6 750.8 400.8C754.5 403.9 756.7 407.2 758.3 411.1C759.9 415.1 758.9 420.3 760.2 424.3C761.4 428.4 763.3 431.9 765.8 435.7C768.4 439.4 772.3 443.1 775.3 447C778.3 450.9 783.1 456.7 783.8 459.2C784.4 461.8 781.4 462.9 779.1 462.1C776.7 461.3 773.1 457.4 769.6 454.5C766.2 451.7 762.7 447.9 758.3 445.1C753.9 442.3 747.6 440.4 743.2 437.5C738.8 434.7 735.7 430.6 731.9 428.1C728.1 425.6 725 424.7 720.6 422.5C716.2 420.3 709.9 417.7 705.5 414.9C701.1 412.1 697.3 407.8 694.2 405.5C691 403.1 690.4 401.5 686.6 400.8C682.8 400 676.9 401.5 671.5 400.8C666.2 400 659 397.5 654.5 396C650.1 394.6 646 393.4 644.7 392.3C643.5 391.2 644.4 389.9 647 389.4C649.6 389 655.2 389.9 660.2 389.4C665.2 389 674.3 388 677.2 386.6C680 385.2 674 382.1 677.2 380.9z" fill="#faf9f3"/>
<path d="M651.1 381.3C652.5 380.3 657.7 379.6 662.1 380C666.5 380.4 675.2 382.5 677.5 383.8C679.9 385.1 678.5 386.9 676.2 387.7C674 388.6 667.7 389.2 664 388.9C660.2 388.6 655.7 387.1 653.6 385.8C651.4 384.6 649.7 382.3 651.1 381.3z" fill="#e0d2d0"/>
<path d="M749.8 397.9C750.4 396.6 755.9 395.8 758.3 396.6C760.7 397.4 763.5 400.4 764.3 402.6C765.2 404.9 764.2 408.6 763.2 410.2C762.3 411.8 760.1 413.4 758.7 412.5C757.3 411.5 756.4 406.9 754.9 404.5C753.4 402.1 749.2 399.2 749.8 397.9z" fill="#cfbfc0"/>
<path d="M760.2 425.3C760.8 424.3 765.1 430.6 767.7 431.9C770.4 433.1 774.3 431.3 776.2 432.8C778.1 434.4 776.6 438.8 779.1 441.3C781.5 443.8 788.9 446.4 790.8 447.9C792.6 449.5 792 450.3 790.4 450.8C788.7 451.2 784.1 451.6 780.9 450.4C777.8 449.1 774.3 445.3 771.5 443.2C768.7 441.1 765.8 440.5 764 437.5C762.1 434.6 759.6 426.2 760.2 425.3z" fill="#e5dada"/>
<path d="M700.2 358.3C701.3 356.3 705.2 355.5 709.2 355.5C713.3 355.5 718.7 357 724.3 358.3C730 359.6 737.9 361.8 743.2 363C748.6 364.3 753.7 364.6 756.4 365.8C759.1 367.1 759.7 368.8 759.4 370.6C759.1 372.3 757.5 374.9 754.5 376.2C751.5 377.6 745.7 378.6 741.3 378.7C736.9 378.8 732.5 377.8 728.1 376.8C723.7 375.8 719.2 374 714.9 372.5C710.7 370.9 705.1 369.7 702.6 367.4C700.2 365 699.1 360.3 700.2 358.3z" fill="#f1ecd4"/>
<path d="M702.6 362.1C703.9 361.2 708.8 360.3 713 360.8C717.3 361.2 723.1 363.6 728.1 364.9C733.1 366.2 740.1 367.2 743.2 368.3C746.4 369.4 747 370.5 747 371.5C747 372.5 745.7 374.1 743.2 374.5C740.7 375 736 375 731.9 374.3C727.8 373.7 723.1 371.9 718.7 370.6C714.3 369.2 708.1 367.6 705.5 366.2C702.8 364.8 701.4 363 702.6 362.1z" fill="#ee6f8c"/>
<path d="M665.8 364C666.2 360.8 668.1 357.7 670.6 355.5C673.1 353.2 677.3 351.1 680.9 350.4C684.6 349.7 689 349.8 692.3 351.1C695.6 352.5 699 355.5 700.8 358.3C702.5 361.1 703 364.7 702.6 367.7C702.3 370.7 701.2 374 698.9 376.2C696.5 378.5 692.1 380.6 688.5 381.3C684.9 382 680.5 381.7 677.2 380.6C673.9 379.4 670.6 377.1 668.7 374.3C666.8 371.6 665.5 367.1 665.8 364z" fill="#fdfdf8"/>
<circle cx="680.6" cy="362.1" r="1.800" fill="#111"/>
<ellipse cx="681.5" cy="367.7" rx="5.600" ry="5" fill="#f08c8c"/>
<circle cx="667.7" cy="361.1" r="1.600" fill="#e86060"/>
<path d="M462.8 474.2C459.4 480 468.2 489.2 471 496.3C473.7 503.4 476.6 510.3 479.2 516.8C481.7 523.3 484.3 529.3 486.3 535.2C488.4 541.1 489.9 547.2 491.5 552C493 556.8 481.9 561.9 495.6 563.9C509.2 565.9 556.3 567.3 573.4 563.9C590.5 560.5 592.5 551.6 598 543.4C603.5 535.2 606.9 525 606.2 514.7C605.5 504.5 598.7 491.3 593.9 482C589.1 472.6 584.3 461.8 577.5 458.4C570.7 455 567.3 461 552.9 461.5C538.6 462 506.5 459.3 491.5 461.5C476.4 463.6 466.2 468.4 462.8 474.2z" fill="#fef1e5"/>
<path d="M573.3 456.7C577.2 454.9 580 459.7 583.5 461.4C587 463.1 590.3 465.8 594.2 467C598.2 468.1 602.1 468.2 607.1 468.2C612.1 468.3 617.8 466.6 624.2 467.4C630.6 468.1 639.5 470.9 645.6 472.7C651.6 474.6 657.8 476.3 660.6 478.5C663.3 480.7 662.6 483.1 661.8 486C661.1 488.9 659 493.7 656.3 496.1C653.6 498.4 649.5 499.7 645.6 500.3C641.7 501 635.2 498.2 632.7 499.9C630.2 501.6 632.4 507.7 630.6 510.6C628.8 513.5 624.9 516.3 622 517.5C619.2 518.6 616.7 515.4 613.5 517.5C610.3 519.5 606.7 525.7 602.8 529.9C598.9 534.1 592.6 538.4 590 542.7C587.3 547 591.7 552.7 586.7 555.5C581.8 558.4 566.6 568.4 560 559.8C553.4 551.3 547.2 518.8 547.2 504.2C547.2 489.6 555.6 480 560 472.1C564.4 464.2 569.3 458.5 573.3 456.7z" fill="#fef1e5"/>
<path d="M576 461.4C578.5 461.4 586.9 468.2 594.2 470C601.5 471.7 612.1 470.8 619.9 472.1C627.8 473.3 635.6 475.1 641.3 477.4C647 479.8 652.7 483.3 654.1 486C655.6 488.7 652 493.5 649.9 493.5C647.7 493.5 646.3 488.3 641.3 486C636.3 483.7 627.4 481 619.9 479.6C612.4 478.2 603.1 479 596.4 477.4C589.6 475.8 582.6 472.6 579.3 470C575.9 467.3 573.6 461.4 576 461.4z" fill="#f6dcc3"/>
<path d="M568.6 474.2C571.8 474.6 579.3 482.1 585.7 484.9C592.1 487.8 600.7 488.9 607.1 491.3C613.5 493.8 620.6 497.1 624.2 499.9C627.8 502.8 628.8 506 628.5 508.5C628.1 511 624.2 515.2 622 514.9C619.9 514.5 619.6 509.4 615.6 506.3C611.7 503.3 604.6 499.4 598.5 496.7C592.4 494 584.6 492.6 579.3 490.3C573.9 488 568.2 485.5 566.4 482.8C564.6 480.1 565.3 473.9 568.6 474.2z" fill="#f6dcc3"/>
<path d="M560 491.3C562.9 491.7 571.8 499.9 577.1 504.2C582.5 508.5 587.8 513.1 592.1 517C596.4 520.9 602.1 524.5 602.8 527.7C603.5 530.9 599.2 536.6 596.4 536.3C593.5 535.9 589.6 529.5 585.7 525.6C581.8 521.7 577.1 516.7 572.8 512.7C568.6 508.8 562.1 505.6 560 502C557.9 498.5 557.1 491 560 491.3z" fill="#f6dcc3"/>
<path d="M634.9 491.3C636 489.2 640.8 485.8 642.4 486C644 486.2 644.7 490.1 644.5 492.4C644.3 494.7 642.7 498.8 641.3 499.9C639.9 501 637 500.3 636 498.8C634.9 497.4 633.8 493.5 634.9 491.3z" fill="#f0c79f"/>
<path d="M614.6 508.5C615.4 506.4 619.6 503.8 621 504.2C622.4 504.5 623.1 508.4 623.1 510.6C623.1 512.8 622.2 516.5 621 517.5C619.8 518.4 617.1 518.1 616.1 516.6C615 515.1 613.7 510.5 614.6 508.5z" fill="#f0c79f"/>
<path d="M561.1 506.5C562.8 507.6 569.7 516.1 573.4 520.9C577.2 525.7 581.1 530.8 583.7 535.2C586.2 539.7 588.4 545 588.8 547.5C589.1 550.1 588.3 553.3 585.7 550.6C583.1 547.9 577.2 537.1 573.4 531.1C569.7 525.1 565.2 518.8 563.2 514.7C561.1 510.6 559.4 505.5 561.1 506.5z" fill="#f6dcc3"/>
<path d="M660.6 481.1C662.1 479.7 667.3 477.3 671.3 477.4C675.2 477.5 679.5 479.9 684.1 481.7C688.7 483.5 694.2 486.5 699.1 488.1C703.9 489.7 710.8 488.7 713.2 491.3C715.5 494 714 500.3 713.2 504.2C712.3 508.1 710.8 512.3 708.1 514.9C705.3 517.5 701.6 519.2 696.9 519.6C692.2 519.9 683.2 516 679.8 517C676.4 518 678 522 676.6 525.6C675.2 529.1 673.9 536.1 671.3 538.4C668.6 540.8 663.2 537.5 660.6 539.7C657.9 541.9 656.6 547.1 655.2 551.9C653.8 556.7 663.6 565.6 652 568.4C640.4 571.1 596.3 571.1 585.7 568.4C575 565.6 587.5 556.2 588.2 551.9C589 547.6 587.5 546.4 590 542.7C592.4 539 598.9 534.1 602.8 529.9C606.7 525.7 610.3 519.5 613.5 517.5C616.7 515.4 619.2 518.6 622 517.5C624.9 516.3 628.8 513.5 630.6 510.6C632.4 507.7 630.2 501.6 632.7 499.9C635.2 498.2 641.7 501 645.6 500.3C649.5 499.7 653.6 498.4 656.3 496.1C659 493.7 661.1 488.5 661.8 486C662.6 483.5 659 482.5 660.6 481.1z" fill="#dc4571"/>
<path d="M662.3 482.8C663.3 481 669.8 479.6 673.4 479.6C677 479.6 678 480.5 684.1 482.8C690.2 485.1 709.1 491.9 709.8 493.5C710.5 495.1 695.5 493 688.4 492.4C681.2 491.9 671.3 491.9 667 490.3C662.6 488.7 661.2 484.6 662.3 482.8z" fill="#e85d84"/>
<path d="M633.8 511.7C637.2 509.7 647.7 505.8 656.3 504.2C664.8 502.6 681.2 501.3 685.2 502C689.1 502.8 684.6 507.4 679.8 508.9C675 510.4 663.6 509.8 656.3 511C649 512.2 639.7 516.1 636 516.2C632.2 516.3 630.4 513.7 633.8 511.7z" fill="#e85d84"/>
<path d="M592.1 542.7C596.4 538.3 606.7 528.6 615.6 525.6C624.5 522.6 644.2 523.1 645.6 524.5C647 525.9 631.3 529.6 624.2 534.1C617.1 538.7 608.5 548.9 602.8 551.9C597.1 554.9 591.7 553.4 590 551.9C588.2 550.4 587.8 547.1 592.1 542.7z" fill="#e85d84"/>
<path d="M680.9 515.3C680.1 513.1 684.3 506.5 686.2 504.2C688.2 501.9 691.2 500.9 692.7 501.6C694.1 502.3 695.5 505.8 695.2 508.5C694.9 511.1 693.3 516.3 690.9 517.5C688.6 518.6 681.7 517.5 680.9 515.3z" fill="#b51f45"/>
<path d="M658 528.1C658.7 526 663.3 523.7 664.8 524.3C666.4 524.9 667.2 529.6 667.4 532C667.6 534.4 667.3 538 666.1 538.8C665 539.7 661.9 539.1 660.6 537.3C659.2 535.6 657.3 530.3 658 528.1z" fill="#b51f45"/>
<path d="M438.2 387.7C438.2 387.7 438.2 400 438.2 400C438.2 400 437.7 410.2 438.2 416.4C438.7 422.5 439.9 430.4 441.3 436.9C442.6 443.4 444.2 449.9 446.4 455.3C448.6 460.8 452.2 466.8 454.6 469.7C457 472.6 458.3 471.5 460.7 472.7C463.1 473.9 465.2 475.1 468.9 476.8C472.7 478.5 478.5 481.6 483.3 483C488 484.3 492.8 485.5 497.6 485C502.4 484.5 508.2 478.5 512 479.9C515.7 481.3 516.4 492.2 520.1 493.2C523.9 494.2 530.9 486 534.5 486C538.1 486 538.9 492.4 541.7 493.2C544.4 494.1 547.6 493 550.9 491.2C554.1 489.3 557.7 485.9 561.1 482C564.5 478 568.6 471.5 571.4 467.6C574.1 463.7 575.1 461.1 577.5 458.4C579.9 455.7 583 453.6 585.7 451.2C588.4 448.8 592 447.1 593.9 444C595.8 441 595.3 436 597 432.8C598.7 429.5 602.3 426.2 604.1 424.6C606 422.9 608.9 424.7 607.8 422.9C606.8 421.2 601.7 416.5 598 414.3C594.3 412.2 590.5 411 585.7 410.2C580.9 409.5 574.8 409.7 569.3 409.8C563.9 410 557.7 411.5 552.9 411.3C548.1 411 544.7 409.4 540.6 408.2C536.5 407 532.4 407.5 528.3 404.1C524.2 400.7 516 387.7 516 387.7C516 387.7 438.2 387.7 438.2 387.7z" fill="#ed688d"/>
<path d="M456.6 473.8C456.6 472 459.2 470.5 460.7 471.7C462.2 472.9 465.6 479.4 465.6 481.1C465.6 482.8 462.2 483.2 460.7 482C459.2 480.7 456.6 475.5 456.6 473.8z" fill="#8f3045"/>
<path d="M510.9 479.9C510.7 477.6 516.1 478 518.1 478.7C520.1 479.4 522.6 481.7 522.8 484C523 486.3 521.3 493.3 519.3 492.6C517.3 491.9 511.1 482.2 510.9 479.9z" fill="#8f3045"/>
<path d="M533.5 486C533.5 484.6 540.5 483.1 541.9 484.2C543.3 485.3 543.3 492.3 541.9 492.6C540.5 492.9 533.5 487.4 533.5 486z" fill="#8f3045"/>
<path d="M594.9 434.8C595.8 431.9 596.1 429.6 598 427.7C599.9 425.7 603.9 423.7 606.2 423.4C608.4 423 610.6 424 611.5 425.6C612.4 427.2 612.4 430.2 611.5 432.8C610.6 435.3 608.4 438.8 606.2 441C603.9 443.2 600 444.4 598 446.1C596 447.8 594.3 447.8 593.9 451.2C593.5 454.7 596.6 465.1 595.5 466.8C594.5 468.5 589.9 463.2 587.8 461.5C585.6 459.7 582.6 458 582.4 456.3C582.3 454.6 585 453.1 586.7 451.2C588.5 449.3 591.5 447.8 592.9 445.1C594.2 442.3 594.1 437.7 594.9 434.8z" fill="#8f3045"/>
<path d="M495.6 409.2C495.6 409.2 499.3 423.4 501.7 430.7C504.1 438.1 507.2 445.4 509.9 453.3C512.6 461.1 518.1 477.9 518.1 477.9" fill="none" stroke="#d6507b" stroke-width="1.1"/>
<path d="M509.9 424.6C509.9 424.6 513.7 440 516 447.1C518.4 454.3 520.8 461.5 524.2 467.6C527.7 473.8 536.5 484 536.5 484" fill="none" stroke="#d6507b" stroke-width="1.1"/>
<path d="M518.1 412.3C518.1 412.3 529.4 424.2 536.5 428.7C543.7 433.1 551.9 436.7 561.1 438.9C570.3 441.1 591.9 442 591.9 442" fill="none" stroke="#d6507b" stroke-width="1.1"/>
<path d="M536.5 422.5C536.5 422.5 546.8 429.9 552.9 432.8C559.1 435.7 566.6 438.4 573.4 440C580.2 441.5 593.9 442 593.9 442" fill="none" stroke="#d6507b" stroke-width="1.1"/>
<path d="M398.1 341.4C395.7 343.7 399.6 348.9 402 352.7C404.4 356.6 408.3 360.2 412.7 364.5C417.1 368.7 423.5 374.4 428.4 378.1C433.3 381.9 436.5 384 442 386.9C447.6 389.9 455.1 393.3 461.6 395.7C468.1 398.2 474.6 400.1 481.1 401.6C487.6 403 494.1 403.9 500.7 404.5C507.2 405.2 514.3 405.7 520.2 405.5C526 405.3 531.3 404.7 535.8 403.5C540.4 402.4 544.2 400.7 547.5 398.7C550.9 396.6 554.8 393.9 555.7 391.4C556.7 389 555.1 386.4 553.4 384C551.7 381.6 548.8 378.8 545.6 377.2C542.3 375.5 540.4 374.1 533.9 374.2C527.3 374.4 518.6 377.2 506.5 378.1C494.5 379.1 473.6 382.7 461.6 380.1C449.5 377.5 441.7 369.3 434.2 362.5C426.7 355.7 422.7 342.6 416.7 339.1C410.6 335.6 400.5 339.1 398.1 341.4z" fill="#8f3045"/>
<path d="M454.8 267.6C447.7 273.2 452 285.1 451.2 294.2C450.3 303.3 448.9 309.1 449.5 322C450.1 334.9 449.1 363.3 454.8 371.6C460.5 379.8 477.4 376.4 483.8 371.6C490.3 366.7 489.5 350.2 493.5 342.6C497.5 334.9 503.2 330.9 508 325.6C512.8 320.4 519.2 316.4 522.5 311.1C525.8 305.9 527.6 299.8 527.8 294.2C528 288.5 525.4 281.3 523.7 277.3C522 273.2 522.7 272.8 517.7 270C512.6 267.2 504 260.7 493.5 260.3C483 259.9 461.8 261.9 454.8 267.6z" fill="#ed688d"/>
<path d="M522 275.9C519.7 276.1 515.1 280.6 511.7 283.5C508.3 286.5 504.5 290.4 501.5 293.8C498.5 297.2 495.5 301.9 493.8 304C492.1 306.2 488.2 305.3 491.2 306.6C494.2 307.9 507.7 312.6 511.7 311.7C515.8 310.9 513.9 304.9 515.6 301.5C517.3 298.1 520.3 294.4 522 291.2C523.6 288 525.6 284.8 525.6 282.3C525.6 279.7 524.3 275.6 522 275.9z" fill="#f589ae"/>
<path d="M526.1 283.5C526.5 284.2 527.6 290.4 527.3 293.8C527.1 297.2 525.7 300.7 524.5 304C523.3 307.3 522.1 312.5 520 313.6C518 314.8 512.5 312.9 512.4 310.7C512.3 308.5 517.4 303.7 519.4 300.2C521.4 296.7 523.4 292.7 524.5 290C525.6 287.2 525.6 282.9 526.1 283.5z" fill="#df5a84"/>
<path d="M379.7 187.1C376.8 187.8 377.4 190.1 376.5 192.3C375.6 194.4 375 197.4 374.6 200C374.2 202.5 374.3 205.1 373.9 207.6C373.6 210.2 373.5 212.8 372.7 215.3C371.8 217.9 370.4 220.7 368.8 223C367.2 225.4 365.1 227.1 363.1 229.4C361 231.8 358.7 234.5 356.7 237.1C354.6 239.7 353.1 239.6 350.9 245C348.7 250.5 344.4 263.8 343.5 270C342.7 276.2 344.5 278.2 346 282.1C347.4 286 349.2 293.1 352 293.5C354.8 293.9 359.5 290 362.9 284.5C366.3 279 367.4 269.9 372.6 260.3C377.7 250.7 390.3 238.8 393.8 226.8C397.3 214.9 396.1 195 393.8 188.4C391.4 181.8 382.6 186.5 379.7 187.1z" fill="#8f3045"/>
<path d="M392.9 179.2C392.9 179.2 395.8 184.5 397.6 187.1C399.5 189.7 401.7 192.5 404 194.8C406.4 197.2 408.7 198.9 411.7 201.2C414.7 203.6 418.6 206.1 422 208.9C425.4 211.7 428.8 215.1 432.2 217.9C435.6 220.7 439 223.2 442.5 225.6C445.9 227.9 448.2 229.6 452.7 232C457.2 234.4 462.3 236.6 469.3 240C476.3 243.5 494.7 252.6 494.7 252.6C494.7 252.6 496.5 265.5 492.3 270C488 274.5 475.6 277.3 469.3 279.7C463.1 282.1 460.4 286.4 454.8 284.5C449.1 282.6 441.9 270.4 435.4 268.1C429 265.7 422.5 269.3 416.1 270.5C409.6 271.7 404 272.9 396.7 275.3C389.5 277.7 380 282 372.6 285C365.1 288 352 293.5 352 293.5C352 293.5 351.1 286 351 282.1C351 278.2 346.7 277.5 351.5 270C356.3 262.5 374.3 243.9 379.7 237.1C385.1 230.3 383.1 232 384.2 229.4C385.3 226.8 385.9 224.3 386.4 221.7C386.9 219.2 387.1 217 387.1 214C387.2 211.1 386.7 207 386.7 203.8C386.8 200.6 387.2 197.4 387.6 194.8C388.1 192.3 388.7 190.8 389.3 188.4C389.9 186.1 390.6 182.3 391.2 180.7C391.8 179.2 392.9 179.2 392.9 179.2z" fill="#ed688d"/>
<path d="M370.1 164.3C371.6 165.3 376.8 169.9 378.4 171.8C380 173.7 379.9 175 379.7 175.6C379.5 176.3 378.8 177.2 377.1 175.6C375.5 174 370.9 167.9 369.7 166C368.5 164.1 368.6 163.4 370.1 164.3z" fill="#eaa685"/>
<path d="M367.9 172C369.4 172.1 375.4 173.4 377.1 174.3C378.9 175.3 378.6 177.1 378.4 177.5C378.2 178 377.6 177.8 375.9 177.2C374.2 176.5 369.5 174.5 368.2 173.7C366.9 172.8 366.4 171.9 367.9 172z" fill="#eaa685"/>
<path d="M369.5 177.7C370.9 177.7 376.8 178.9 378.4 179.7C380 180.5 379.4 182.3 379.1 182.7C378.7 183 378.1 182.5 376.5 182C374.9 181.5 370.9 180.4 369.7 179.7C368.5 179 368 177.7 369.5 177.7z" fill="#eaa685"/>
<path d="M380 158.3C380.3 157.3 380.9 156.3 381.6 157.9C382.3 159.5 383.1 164.8 384.2 167.9C385.3 171.1 386.9 174.5 388 176.9C389.1 179.2 390.5 180.1 390.7 182C390.9 183.9 389.8 186.3 389.3 188.4C388.8 190.6 388.8 194.4 387.6 194.8C386.5 195.3 383.6 192.3 382.3 191C380.9 189.7 380.3 188.9 379.7 187.1C379.1 185.4 379 182.7 378.4 180.7C377.9 178.8 376.5 176.9 376.5 175.6C376.5 174.3 377.8 173.9 378.4 173.1C379.1 172.2 380.1 172 380.3 170.5C380.6 169 379.8 166.1 379.7 164.1C379.6 162.1 379.6 159.3 380 158.3z" fill="#fdd9bd"/>
<path d="M400.6 330.3C402.3 329.1 412.4 326.5 418.6 325.4C424.9 324.3 432.3 324 438.1 323.4C444 322.9 447.3 324 453.8 322.1C460.3 320.1 470 312.1 477.2 311.7C484.4 311.3 493.5 316.1 496.7 319.5C500 323 494.5 325.9 496.7 332.2C499 338.6 505.5 353.9 510.4 357.6C515.3 361.4 520.8 354.9 526 354.7C531.3 354.5 537.1 355 541.7 356.7C546.2 358.3 550.6 361.2 553.4 364.5C556.2 367.7 557.3 372.6 558.3 376.2C559.3 379.8 559.7 383.4 559.3 386C558.8 388.5 556.7 391.7 555.7 391.4C554.8 391.1 555.1 386.4 553.4 384C551.7 381.6 548.8 378.8 545.6 377.2C542.3 375.5 538.1 374.6 533.9 374.2C529.6 373.9 524.7 374.4 520.2 375.2C515.6 376 511.1 378 506.5 379.1C502 380.3 497.7 381.4 492.8 382C488 382.7 482.4 383.2 477.2 383C472 382.9 466.5 382.4 461.6 381.1C456.7 379.8 452.5 378 447.9 375.2C443.3 372.4 438.5 368.5 434.2 364.5C430 360.4 425.4 354.9 422.5 350.8C419.6 346.7 418.9 343.1 416.7 340C414.4 337 411.5 333.9 408.8 332.2C406.2 330.6 399 331.4 400.6 330.3z" fill="#f589ae"/>
<path d="M495.8 344C496.4 341.8 497.6 338.6 500.7 339.1C503.7 339.6 511.7 343.9 514.3 346.9C516.9 349.9 517.9 355.3 516.3 357C514.7 358.7 507.8 357.9 504.6 357C501.3 356.2 498.2 353.9 496.7 351.8C495.3 349.6 495.1 346.1 495.8 344z" fill="#e79bbf"/>
<path d="M494.8 329.3C496 327.3 502.9 330 504.6 331.3C506.2 332.6 505.2 335.3 504.6 337.1C503.9 338.9 502.1 339.7 500.7 342C499.2 344.3 495.4 348.5 495.8 350.8C496.1 353.1 500.3 354.6 502.6 355.7C504.9 356.7 511.1 356 509.4 357.2C507.8 358.4 498.2 361.3 492.8 362.9C487.5 364.5 481.3 366.5 477.2 366.8C473.1 367.1 468 366.2 468 364.5C468 362.8 473.1 359.3 477.2 356.7C481.3 354 489.5 351.1 492.8 348.8C496.2 346.6 496.8 346.2 497.1 343C497.5 339.7 493.6 331.3 494.8 329.3z" fill="#df5a84"/>
<path d="M371.1 358.6C371.4 357 372.3 351.9 373.7 348.8C375.1 345.7 376.9 342.3 379.5 340C382.1 337.8 385.6 336.5 389.3 335.2C393 333.8 398.1 332 402 331.8C405.9 331.7 410.2 332.8 412.7 334.2C415.3 335.6 419.3 339.1 417 340.2C414.8 341.4 403 340.1 399.1 341C395.1 342 394.8 344.3 393.2 345.9C391.6 347.5 389.5 349 389.3 350.8C389.1 352.6 392.2 354.5 392.2 356.7C392.3 358.8 390.8 363.4 389.7 363.7C388.6 364 386.8 360.4 385.4 358.6C384 356.8 382.8 354.4 381.5 352.7C380.2 351.1 378.7 348.5 377.6 348.8C376.4 349.2 375.6 353.1 374.7 354.7C373.7 356.3 372.7 358 372.1 358.6C371.5 359.3 370.9 360.2 371.1 358.6z" fill="#fdd9bd"/>
<path d="M494.4 253.4C495.4 253.4 495.6 257.9 497.6 259.2C499.7 260.6 503.8 261.3 506.6 261.5C509.4 261.7 513.1 259.4 514.5 260.5C516 261.6 516.2 266 515.3 267.9C514.4 269.9 512.1 270.7 509.2 272.3C506.2 273.9 501.3 275.9 497.6 277.4C494 278.9 488.5 282.8 487.1 281.5C485.7 280.2 488.5 273.2 489.3 269.5C490.1 265.7 491 261.9 491.9 259.2C492.7 256.5 493.5 253.4 494.4 253.4z" fill="#e9b593"/>
<path d="M492.8 252.6C492.8 252.6 490.4 260 489.3 264.3C488.2 268.6 487 273.9 486.1 278.4C485.3 282.9 485 286 484.2 291.2C483.4 296.5 481.2 309.8 481.2 309.8" fill="none" stroke="#9bd3ee" stroke-width="3.7"/>
<path d="M486.1 282C486.1 282 493.8 279.6 497.6 278.2C501.5 276.8 506 274.9 509.2 273.6C512.3 272.2 516.6 270.2 516.6 270.2" fill="none" stroke="#9bd3ee" stroke-width="3.7"/>
<path d="M492.8 252.6C492.8 252.6 490.4 260 489.3 264.3C488.2 268.6 487 273.9 486.1 278.4C485.3 282.9 485 286 484.2 291.2C483.4 296.5 481.2 309.8 481.2 309.8" fill="none" stroke="#f08aa8" stroke-width="1.1" stroke-dasharray="1.200 2.200"/>
<path d="M486.1 282C486.1 282 493.8 279.6 497.6 278.2C501.5 276.8 506 274.9 509.2 273.6C512.3 272.2 516.6 270.2 516.6 270.2" fill="none" stroke="#f08aa8" stroke-width="1.1" stroke-dasharray="1.200 2.200"/>
<path d="M560 139.8C554.7 141 547.8 143.3 541.3 145.2C534.9 147.1 527.9 148.9 521.1 151.2C514.4 153.6 506.6 156.5 500.9 159.3C495.2 162.2 491.1 164.9 486.7 168.4C482.4 172 478.5 175.8 474.6 180.6C470.7 185.3 467 191 463.5 196.7C459.9 202.5 456.6 209.2 453.4 214.9C450.2 220.7 447.1 225.7 444.3 231.1C441.4 236.5 438.7 241.9 436.2 247.3C433.7 252.7 431 259.4 429.1 263.5C427.2 267.5 424 268.9 425.1 271.6C426.1 274.3 431.3 276.8 435.4 279.7C439.6 282.6 450 288.9 450 288.9C450 288.9 452 287.7 452.9 284.5C453.7 281.4 454.5 272.5 454.8 270C455 267.5 452.9 272.6 454.4 269.5C455.8 266.4 460.1 257.7 463.5 251.3C466.8 244.9 470.7 237.5 474.6 231.1C478.5 224.7 482.4 219 486.7 212.9C491.1 206.8 496.2 200.1 500.9 194.7C505.6 189.3 510.3 184.6 515 180.6C519.8 176.5 524.1 173.3 529.2 170.4C534.3 167.6 540.2 165 545.4 163.4C550.5 161.7 555.4 161.1 560 160.6C564.6 160.1 568.7 160.8 573 160.6C577.4 160.4 581.7 159.8 586 159.3C590.4 158.8 594.7 157.8 599.1 157.3C603.4 156.9 608.2 156.6 612.1 156.7C616 156.8 619 157 622.5 158C626 159 629.5 160.7 632.9 162.6C636.4 164.4 639.9 166.5 643.3 169.1C646.8 171.7 650.7 174.9 653.8 178.2C656.8 181.4 659.6 185 661.6 188.6C663.5 192.3 665.5 194.5 665.5 200.1C665.5 205.6 664.2 215.4 661.6 221.9C658.9 228.4 654.7 233.2 649.5 238.8C644.2 244.5 637 250.6 630.1 255.8C623.3 261 616.4 265.2 608.4 270C600.3 274.9 589.8 280 581.8 285C573.7 290 566.4 296.1 560 300.2C553.6 304.4 549 307.5 543.6 309.8C538.3 312 533.2 313.3 528 313.7C522.8 314 517.6 312.9 512.4 311.7C507.2 310.6 500.7 307.8 496.7 306.8C492.8 305.9 493.5 304.6 488.9 305.9C484.4 307.2 475.3 312 469.4 314.7C463.5 317.3 453.8 321.5 453.8 321.5C453.8 321.5 451.2 322.7 453.8 322.7C456.4 322.7 464.2 321 469.4 321.5C474.6 321.9 479.8 323.6 485 325.4C490.2 327.2 495.4 330.4 500.7 332.2C505.9 334 511.1 335.7 516.3 336.1C521.5 336.6 526.7 336.1 531.9 335.2C537.1 334.2 542.9 332.1 547.5 330.3C552.2 328.5 553.9 327.7 560 324.4C566.1 321.1 572.9 317.3 584.2 310.6C595.5 304 615.8 291.3 627.7 284.5C639.6 277.7 648.7 274.8 655.5 270C662.4 265.2 663.8 261.8 668.8 255.8C673.9 249.8 681.5 240.4 685.8 234C690 227.6 692.4 222.7 694.5 217.1C696.6 211.4 698.2 205.1 698.3 200.1C698.5 195.2 697.2 191.2 695.4 187.3C693.7 183.4 690.7 180.1 687.6 176.9C684.6 173.6 681.1 170.6 677.2 167.8C673.3 164.9 668.5 162.2 664.2 160C659.8 157.7 655.5 155.9 651.2 154.1C646.8 152.2 642.5 150.5 638.1 148.9C633.8 147.3 629.5 145.6 625.1 144.3C620.8 143 616.4 142 612.1 141.1C607.8 140.1 603.4 139.1 599.1 138.5C594.7 137.8 590.4 137.3 586 137.2C581.7 137.1 577.4 137.4 573 137.8C568.7 138.2 565.3 138.5 560 139.8z" fill="#fcb8d4"/>
<path d="M559 229C559.9 225.6 562.7 215.8 566.7 213.7C570.8 211.5 579.9 215 583.4 216.2C586.8 217.5 586.9 219.2 587.5 221.4C588 223.5 587.6 226.6 586.7 229C585.8 231.5 583.9 234.2 582.1 236.1C580.3 237.9 578 239.7 575.7 240.1C573.3 240.4 570.4 239.2 568 238.3C565.7 237.3 563.1 235.7 561.6 234.2C560.1 232.6 558.2 232.5 559 229z" fill="#33190f"/>
<path d="M555.2 179.1C556.1 175.9 563.5 177.4 566.7 177.8C569.9 178.2 572.3 179.9 574.4 181.7C576.5 183.4 578 185.5 579.5 188.1C581 190.6 582.6 194 583.4 197C584.2 200 586.3 204.3 584.4 206C582.5 207.7 575.6 208.8 571.8 207.3C568 205.8 564.4 201.7 561.6 197C558.8 192.3 554.3 182.3 555.2 179.1z" fill="#23100a"/>
<ellipse cx="586.8" cy="183.6" rx="13" ry="8.200" transform="rotate(-38 586.8 183.6)" fill="none" stroke="#23100a" stroke-width="8.400"/>
<path d="M496.3 216.2C496.8 214.7 499.5 212.6 500.1 213.7C500.8 214.7 500.7 221.1 500.1 222.6C499.6 224.1 497.6 223.7 496.9 222.6C496.3 221.6 495.7 217.7 496.3 216.2z" fill="#eab898"/>
<path d="M542.4 243.1C543.6 241.6 547.4 241 548.2 241.8C548.9 242.7 548 246.8 546.9 248.3C545.7 249.7 541.9 251.7 541.1 250.8C540.4 250 541.2 244.6 542.4 243.1z" fill="#eab898"/>
<path d="M499.5 213.7C498.5 216.9 497.7 221.8 496.9 225.2C496.2 228.6 495.2 231 495 234.2C494.8 237.4 495 241.2 495.6 244.4C496.3 247.6 497 250.9 498.8 253.4C500.7 255.9 503.3 258.1 506.5 259.3C509.7 260.4 514.4 260.7 518.1 260.3C521.7 259.9 525.1 258.1 528.3 256.7C531.5 255.3 534.6 253.7 537.3 252.1C539.9 250.5 542.6 248.7 544.3 247C546.1 245.3 546.9 244.4 547.8 241.8C548.7 239.3 549.5 235 549.8 231.6C550.2 228.2 550.4 225.4 549.8 221.4C549.2 217.3 549 211.1 546.2 207.3C543.5 203.4 538.8 199.8 533.4 198.3C528.1 196.8 519.3 197 514.2 198.3C509.1 199.6 505.1 203.4 502.7 206C500.2 208.5 500.4 210.5 499.5 213.7z" fill="#fdd9bd"/>
<path d="M499.2 216.2C499.4 214.2 499.9 210.3 500.8 207.3C501.7 204.3 502.8 201.2 504.6 198.3C506.4 195.4 509 192.1 511.7 190C514.3 187.8 517.6 186.5 520.6 185.5C523.6 184.5 525.3 184 529.6 184.2C533.9 184.5 541.7 185.7 546.2 187C550.7 188.3 553.9 190 556.5 191.9C559 193.8 560.2 196 561.6 198.3C563 200.6 564.2 203 564.9 206C565.7 209 566.2 213 566.2 216.2C566.2 219.4 565.7 222.2 564.9 225.2C564.2 228.2 563 231.6 561.6 234.2C560.2 236.8 558.6 239.1 556.5 240.8C554.3 242.6 551 244.2 548.8 244.7C546.6 245.2 543.8 245.2 543.4 243.9C543 242.6 545.2 239.6 546.2 236.7C547.3 233.8 549.1 229.7 549.6 226.5C550 223.3 549.5 220.1 548.8 217.5C548.1 215 547.1 212.7 545.6 211.1C544.1 209.5 541.9 208.2 539.8 207.9C537.8 207.6 535 209.4 533.4 209.3C531.8 209.2 531.6 208.4 530.2 207.3C528.8 206.2 527 203.9 525.1 202.8C523.2 201.7 520.9 200.8 518.7 200.9C516.5 201 513.8 202 511.7 203.4C509.5 204.8 507.6 207.2 505.9 209.2C504.2 211.2 502.4 213.9 501.4 215.6C500.4 217.3 500 219.3 499.6 219.4C499.2 219.5 499 218.3 499.2 216.2z" fill="#46281a"/>
<path d="M528.7 184.5C527.5 183.4 529 180.1 530.2 178.4C531.4 176.8 533.5 175.5 536 174.7C538.4 173.9 542.2 173.5 545 173.7C547.7 173.9 550.3 174.9 552.6 175.9C555 176.9 557.5 178.1 559 179.7C560.6 181.3 561.5 183.6 561.9 185.5C562.2 187.4 562 190.1 561.1 191.3C560.2 192.4 559 192.8 556.5 192.2C554 191.5 549.4 188.5 546.2 187.3C543 186.1 540.2 185.3 537.3 184.9C534.3 184.4 529.9 185.5 528.7 184.5z" fill="#33190f"/>
<path d="M557.1 192.5C557.1 191.2 559.8 190.1 561.6 190.4C563.4 190.6 565.9 192.7 568 193.8C570.1 194.9 572.4 195.6 574.4 197C576.4 198.4 578.6 200 580.2 202.1C581.8 204.3 583.4 207.1 584.1 209.8C584.9 212.6 585.3 216.2 584.9 218.8C584.6 221.4 583.4 223.3 582.1 225.2C580.8 227.1 578.3 228 577 230.3C575.7 232.6 575.9 238 574.4 239C572.9 240.1 570.2 237.7 568 236.7C565.8 235.7 561.9 235.1 561.3 233.1C560.8 231.2 564 228 564.8 225.2C565.6 222.4 566.2 219.4 566.2 216.2C566.2 213 565.7 209 564.9 206C564.2 203 562.9 200.5 561.6 198.3C560.3 196.1 557.1 193.9 557.1 192.5z" fill="#f98bb5"/>
<path d="M559 193.8C559.9 193.2 564.6 193.9 566.7 195.1C568.9 196.3 571.4 198.8 571.8 200.9C572.3 202.9 570.5 206.8 569.3 207.3C568.1 207.7 566.1 204.9 564.8 203.4C563.5 202 562.6 200.2 561.6 198.6C560.6 197 558.2 194.4 559 193.8z" fill="#fca9c8"/>
<path d="M573.1 199.6C574.1 198.7 577.9 201.5 579.5 203.4C581.1 205.3 582.9 209.4 582.7 211.1C582.5 212.8 579.7 214.1 578.3 213.7C576.8 213.2 574.6 210.9 573.8 208.5C572.9 206.2 572.2 200.4 573.1 199.6z" fill="#fca9c8"/>
<path d="M566.7 216.2C568.2 214.7 572.3 213.2 574.4 213.7C576.5 214.1 579.1 216.7 579.5 218.8C580 220.9 578.5 225.4 577 226.5C575.5 227.5 572.4 225.8 570.6 225.2C568.7 224.6 566.3 224.1 565.7 222.6C565.1 221.1 565.3 217.7 566.7 216.2z" fill="#fca9c8"/>
<path d="M564.2 227.8C565.8 226.9 570.1 226.3 571.8 227.8C573.6 229.3 575.2 235.4 574.7 236.7C574.1 238 570.7 236.4 568.6 235.7C566.6 235 563 233.9 562.2 232.6C561.5 231.3 562.6 228.6 564.2 227.8z" fill="#fca9c8"/>
<ellipse cx="507.6" cy="227.8" rx="3.900" ry="4.300" fill="#2b0d12"/>
<ellipse cx="528.0" cy="240.1" rx="4.500" ry="4.600" fill="#2b0d12"/>
<path d="M503.2 222.9C503.3 222.6 506.5 222.5 507.8 222.9C509.1 223.3 511.1 224.9 511 225.2C510.9 225.5 508.5 225.1 507.2 224.7C505.9 224.3 503.1 223.2 503.2 222.9z" fill="#2b0d12"/>
<path d="M523.8 235.2C523.4 234.6 526.7 234.1 528.6 235.2C530.4 236.3 534.3 241.3 534.7 241.8C535.1 242.4 532.7 239.8 530.9 238.6C529 237.5 524.2 235.8 523.8 235.2z" fill="#2b0d12"/>
<path d="M507.8 215.3C507.8 215.3 510.4 216.8 511.7 218.2C512.9 219.5 515.5 223.3 515.5 223.3" fill="none" stroke="#3a1f14" stroke-width="0.9"/>
<path d="M528.6 230.6C528.6 230.6 531.8 230.8 533.4 231.6C535.1 232.4 538.5 235.2 538.5 235.2" fill="none" stroke="#3a1f14" stroke-width="0.9"/>
<path d="M511 237.7C511 237.7 507.9 239 507.2 239.9C506.5 240.9 506.8 243.4 506.8 243.4" fill="none" stroke="#f2b9a0" stroke-width="0.9"/>
<path d="M502 245.7C502.6 245.6 504.8 248.2 506.5 248.9C508.3 249.6 512.6 249.6 512.7 250C512.8 250.5 508.7 251.7 507.2 251.6C505.6 251.5 504.2 250.3 503.3 249.3C502.5 248.3 501.5 245.8 502 245.7z" fill="#e8607a"/></g><!--/ART--></g>
<g clip-path="url(#cv)"><path d="M343.500 136.500H943.500" stroke="#3b8df5" stroke-width="1" stroke-dasharray="4.500 2.500" stroke-dashoffset="0.500" fill="none"/><path d="M343.500 136.500V689" stroke="#3b8df5" stroke-width="1" stroke-dasharray="4.500 2.500" stroke-dashoffset="0.150" fill="none"/>
<rect x="339.500" y="132.500" width="8" height="8" rx="0.800" fill="#fff" stroke="#3b8df5" stroke-width="1.150"/><rect x="639.500" y="132.500" width="8" height="8" rx="0.800" fill="#fff" stroke="#3b8df5" stroke-width="1.150"/><rect x="339.500" y="409.500" width="8" height="8" rx="0.800" fill="#fff" stroke="#3b8df5" stroke-width="1.150"/></g>
<!-- scrollbars -->
<rect x="820" y="116" width="14" height="14" fill="#4a4a4a"/><path d="M823.500 125L827 121.500L830.500 125" fill="none" stroke="#8c8c8c" stroke-width="1.200"/>
<rect x="820" y="263" width="14" height="128" fill="#4f4f4f"/>
<rect x="820" y="538" width="14" height="14" fill="#4a4a4a"/><path d="M823.500 543L827 546.500L830.500 543" fill="none" stroke="#8c8c8c" stroke-width="1.200"/>
<rect x="285" y="552" width="15" height="15" fill="#555"/>
<rect x="301" y="553" width="14" height="14" fill="#4a4a4a"/><path d="M310 556.500L306.500 560L310 563.500" fill="none" stroke="#8c8c8c" stroke-width="1.200"/>
<rect x="478" y="553" width="165" height="14" fill="#4f4f4f"/>
<rect x="806" y="553" width="14" height="14" fill="#4a4a4a"/><path d="M811 556.500L814.500 560L811 563.500" fill="none" stroke="#8c8c8c" stroke-width="1.200"/>
<!-- zoom widget -->
<g><circle cx="702.700" cy="534.500" r="6" fill="#4d4d4d"/><path d="M699.700 534.500H705.700" stroke="#fff" stroke-width="1.300"/><path d="M707.500 540L711.500 544" stroke="#b5b5b5" stroke-width="1.500" stroke-linecap="round"/>
<text x="722" y="541.300" font-size="13" font-family="Liberation Sans,sans-serif" fill="#9a9a9a" opacity=".9">100%</text><text x="759.500" y="540.500" font-size="10" font-family="Liberation Sans,sans-serif" fill="#a6a6a6">1:1</text>
<circle cx="794.400" cy="534.500" r="6" fill="#4d4d4d"/><path d="M791.400 534.500H797.400M794.400 531.500V537.500" stroke="#fff" stroke-width="1.300"/><path d="M799.500 540L803.500 544" stroke="#b5b5b5" stroke-width="1.500" stroke-linecap="round"/></g>
</svg>
</div>
<div id="rightpanel" class="abs">
<div class="hdr" style="top:0;height:26px"></div><svg style="left:13.500px;top:11px" width="8" height="4" viewBox="0 0 8 4"><path d="M0 0H8L4 4z" fill="#d8d8d8"/></svg><div class="t" style="left:32px;top:5px;color:#e4e4e4">位置大小</div>
<svg style="left:9px;top:57px" width="19.500" height="19.500" viewBox="0 0 21 21"><g fill="none" stroke="#c8c8c8" stroke-width="1"><path d="M2.500 2.500H18.500V18.500H2.500zM10.500 2.500V18.500M2.500 10.500H18.500"/></g><g fill="#444" stroke="#c8c8c8" stroke-width="1"><rect x="0.500" y="0.500" width="4" height="4"/><rect x="8.500" y="0.500" width="4" height="4"/><rect x="16.500" y="0.500" width="4" height="4"/><rect x="0.500" y="8.500" width="4" height="4"/><rect x="8.500" y="8.500" width="4" height="4" fill="#fff"/><rect x="16.500" y="8.500" width="4" height="4"/><rect x="0.500" y="16.500" width="4" height="4"/><rect x="8.500" y="16.500" width="4" height="4"/><rect x="16.500" y="16.500" width="4" height="4"/></g></svg>
<div class="t" style="left:41px;top:40px;font-size:13px">X</div><div class="inp" style="left:59px;top:35px;width:64px;height:26px;line-height:26px;font-size:11.400px;color:#c8c8c8">384.2</div>
<div class="t" style="left:153px;top:40px;font-size:13px">Y</div><div class="inp" style="left:171px;top:35px;width:64px;height:26px;line-height:26px;font-size:11.400px;color:#c8c8c8">349.05</div>
<div class="t" style="left:41px;top:76px">宽</div><div class="inp" style="left:59px;top:71px;width:64px;height:26px;line-height:26px;font-size:11.400px;color:#c8c8c8">600</div>
<svg style="left:131px;top:77px" width="14" height="14" viewBox="0 0 14 14"><g fill="none" stroke="#d8d8d8" stroke-width="2.200"><path d="M6.200 3.400A3.100 3.100 0 1 1 10.600 7.800"/><path d="M7.800 10.600A3.100 3.100 0 1 1 3.400 6.200"/></g><path d="M2 2L12 12" stroke="#444" stroke-width="4.200"/><path d="M2.200 2.200L11.800 11.800" stroke="#d8d8d8" stroke-width="2.200"/></svg>
<div class="t" style="left:153px;top:76px">高</div><div class="inp" style="left:171px;top:71px;width:64px;height:26px;line-height:26px;font-size:11.400px;color:#c8c8c8">552.79</div>
<svg style="left:42px;top:114px" width="12" height="12" viewBox="0 0 12 12"><path d="M1 0V11H12" fill="none" stroke="#d8d8d8" stroke-width="1.800"/><path d="M1 5.500H6.500V11" fill="none" stroke="#d8d8d8" stroke-width="1.500"/></svg>
<div class="inp" style="left:59px;top:107px;width:64px;height:26px;line-height:26px;font-size:11.400px;color:#c8c8c8">0</div>
<div class="hdr" style="top:143.500px;height:26px"></div><svg style="left:13.500px;top:154.5px" width="8" height="4" viewBox="0 0 8 4"><path d="M0 0H8L4 4z" fill="#d8d8d8"/></svg><div class="t" style="left:32px;top:148.500px;color:#e4e4e4">对象编辑</div>
<div class="t" style="left:11px;top:184px">组合</div><div class="btn" style="left:47px;top:179.4px;width:26px;height:25px"><svg style="left:-1px;top:-1px" width="25" height="25" viewBox="0 0 25 25"><path d="M6.500 6.500H18.500V18.500H6.500z" fill="none" stroke="#8c8c8c" stroke-width="1.200"/><path d="M9.500 9.500H15.500V15.500H9.500z" fill="#8c8c8c"/><g fill="#8c8c8c"><rect x="5" y="5" width="3" height="3"/><rect x="17" y="5" width="3" height="3"/><rect x="5" y="17" width="3" height="3"/><rect x="17" y="17" width="3" height="3"/></g></svg></div><div class="btn" style="left:72px;top:179.4px;width:26px;height:25px"><svg style="left:-1px;top:-1px" width="25" height="25" viewBox="0 0 25 25"><g fill="#dcdcdc"><rect x="6.500" y="6.500" width="8" height="8"/><rect x="10.500" y="10.500" width="8" height="8" stroke="#505050" stroke-width="1"/><rect x="5" y="5" width="3" height="3"/><rect x="13" y="5" width="3" height="3"/><rect x="5" y="13" width="3" height="3"/><rect x="17" y="9" width="3" height="3"/><rect x="9" y="17" width="3" height="3"/><rect x="17" y="17" width="3" height="3"/></g></svg></div>
<div class="t" style="left:115px;top:184px">翻转</div><div class="btn" style="left:147px;top:179.4px;width:26px;height:25px"><svg style="left:-1px;top:-1px" width="25" height="25" viewBox="0 0 25 25"><path d="M8 5.500L18 11H8z" fill="#dcdcdc"/><path d="M8 19.500L18 14H8z" fill="#8c8c8c"/><path d="M5 12.500H20.500" stroke="#dcdcdc" stroke-width="1.200"/></svg></div><div class="btn" style="left:172px;top:179.4px;width:26px;height:25px"><svg style="left:-1px;top:-1px" width="25" height="25" viewBox="0 0 25 25"><path d="M5.500 18L11 7V18z" fill="#dcdcdc"/><path d="M19.500 18L14 7V18z" fill="#8c8c8c"/><path d="M12.500 5V20.500" stroke="#dcdcdc" stroke-width="1.200"/></svg></div>
<div class="t" style="left:11px;top:220px">对齐</div><div class="btn" style="left:47px;top:215.4px;width:26px;height:25px"><svg style="left:-1px;top:-1px" width="25" height="25" viewBox="0 0 25 25"><path d="M7.500 6V19.500" stroke="#8c8c8c" stroke-width="1.200"/><rect x="9.500" y="7" width="6" height="4" fill="#8c8c8c"/><rect x="9.500" y="13.500" width="10" height="4" fill="#8c8c8c"/></svg></div><div class="btn" style="left:72px;top:215.4px;width:26px;height:25px"><svg style="left:-1px;top:-1px" width="25" height="25" viewBox="0 0 25 25"><path d="M12.500 5.500V20" stroke="#8c8c8c" stroke-width="1.200"/><rect x="9.500" y="7.500" width="6" height="4" fill="#8c8c8c"/><rect x="7.500" y="13.500" width="10" height="4" fill="#8c8c8c"/></svg></div><div class="btn" style="left:97px;top:215.4px;width:26px;height:25px"><svg style="left:-1px;top:-1px" width="25" height="25" viewBox="0 0 25 25"><path d="M18 6V19.500" stroke="#8c8c8c" stroke-width="1.200"/><rect x="10" y="7" width="6" height="4" fill="#8c8c8c"/><rect x="6" y="13.500" width="10" height="4" fill="#8c8c8c"/></svg></div><div class="btn" style="left:122px;top:215.4px;width:26px;height:25px"><svg style="left:-1px;top:-1px" width="25" height="25" viewBox="0 0 25 25"><path d="M5.500 6.500H19.500" stroke="#8c8c8c" stroke-width="1.200"/><rect x="8.500" y="8.500" width="4" height="11" fill="#8c8c8c"/><rect x="14" y="8.500" width="4" height="6.500" fill="#8c8c8c"/></svg></div><div class="btn" style="left:147px;top:215.4px;width:26px;height:25px"><svg style="left:-1px;top:-1px" width="25" height="25" viewBox="0 0 25 25"><path d="M5 12.500H20.500" stroke="#8c8c8c" stroke-width="1.200"/><rect x="8" y="6.500" width="4" height="12" fill="#8c8c8c"/><rect x="14" y="9.500" width="4" height="6" fill="#8c8c8c"/></svg></div><div class="btn" style="left:172px;top:215.4px;width:26px;height:25px"><svg style="left:-1px;top:-1px" width="25" height="25" viewBox="0 0 25 25"><path d="M5.500 19.500H19.500" stroke="#8c8c8c" stroke-width="1.200"/><rect x="8" y="12" width="4" height="6" fill="#8c8c8c"/><rect x="13.500" y="7" width="4" height="11" fill="#8c8c8c"/></svg></div>
<div class="t" style="left:11px;top:256px">分布</div><div class="btn" style="left:47px;top:251.3px;width:26px;height:25px"><svg style="left:-1px;top:-1px" width="25" height="25" viewBox="0 0 25 25"><path d="M6.500 6V19.500M18.500 6V19.500" stroke="#8c8c8c" stroke-width="1.200"/><rect x="8.500" y="9.500" width="3" height="6" fill="#8c8c8c"/><rect x="13" y="7.500" width="4" height="10" fill="#8c8c8c"/></svg></div><div class="btn" style="left:72px;top:251.3px;width:26px;height:25px"><svg style="left:-1px;top:-1px" width="25" height="25" viewBox="0 0 25 25"><path d="M9 5.500V20M16 5.500V20" stroke="#8c8c8c" stroke-width="1.200"/><rect x="7" y="8" width="4" height="9" fill="#8c8c8c"/><rect x="14.500" y="9.500" width="3" height="6" fill="#8c8c8c"/></svg></div><div class="btn" style="left:97px;top:251.3px;width:26px;height:25px"><svg style="left:-1px;top:-1px" width="25" height="25" viewBox="0 0 25 25"><path d="M12.500 6V19.500M18.500 6V19.500" stroke="#8c8c8c" stroke-width="1.200"/><rect x="7" y="8" width="4" height="9" fill="#8c8c8c"/><rect x="14" y="9.500" width="3" height="6" fill="#8c8c8c"/></svg></div><div class="btn" style="left:122px;top:251.3px;width:26px;height:25px"><svg style="left:-1px;top:-1px" width="25" height="25" viewBox="0 0 25 25"><path d="M6 6.500H19.500" stroke="#8c8c8c" stroke-width="1.200"/><rect x="8.500" y="8.500" width="8" height="3" fill="#8c8c8c"/><rect x="6.500" y="14" width="12" height="4.500" fill="#8c8c8c"/></svg></div><div class="btn" style="left:147px;top:251.3px;width:26px;height:25px"><svg style="left:-1px;top:-1px" width="25" height="25" viewBox="0 0 25 25"><path d="M6 9.500H19.500M6 16H19.500" stroke="#8c8c8c" stroke-width="1.200"/><rect x="8.500" y="7.500" width="8" height="4" fill="#8c8c8c"/><rect x="7" y="14" width="11" height="4" fill="#8c8c8c"/></svg></div><div class="btn" style="left:172px;top:251.3px;width:26px;height:25px"><svg style="left:-1px;top:-1px" width="25" height="25" viewBox="0 0 25 25"><path d="M6 19H19.500M6 12.500H19.500" stroke="#8c8c8c" stroke-width="1.200"/><rect x="8.500" y="7" width="8" height="4" fill="#8c8c8c"/><rect x="7" y="14" width="11" height="3.500" fill="#8c8c8c"/></svg></div>
<div class="t" style="left:11px;top:292px">层次</div><div class="btn" style="left:47px;top:287.3px;width:26px;height:25px"><svg style="left:-1px;top:-1px" width="25" height="25" viewBox="0 0 25 25"><path d="M12.500 4L18.500 7.500L12.500 11L6.500 7.500z" fill="none" stroke="#dcdcdc" stroke-width="1"/><path d="M12.500 12L19.500 16L12.500 20.500L5.500 16z" fill="#dcdcdc"/><path d="M12.500 13V6.500M10.500 8.500L12.500 6.500L14.500 8.500" fill="none" stroke="#dcdcdc" stroke-width="1.100"/></svg></div><div class="btn" style="left:72px;top:287.3px;width:26px;height:25px"><svg style="left:-1px;top:-1px" width="25" height="25" viewBox="0 0 25 25"><path d="M12.500 4L19.500 8L12.500 12L5.500 8z" fill="#dcdcdc"/><path d="M12.500 13.500L18.500 17L12.500 20.500L6.500 17z" fill="none" stroke="#dcdcdc" stroke-width="1"/><path d="M12.500 11V18M10.500 16L12.500 18L14.500 16" fill="none" stroke="#dcdcdc" stroke-width="1.100"/></svg></div><div class="btn" style="left:97px;top:287.3px;width:26px;height:25px"><svg style="left:-1px;top:-1px" width="25" height="25" viewBox="0 0 25 25"><path d="M12.500 4L19.500 8L12.500 12L5.500 8z" fill="#dcdcdc"/><path d="M6.500 12L12.500 15.500L18.500 12M6.500 16L12.500 19.500L18.500 16" fill="none" stroke="#dcdcdc" stroke-width="1.100"/></svg></div><div class="btn" style="left:122px;top:287.3px;width:26px;height:25px"><svg style="left:-1px;top:-1px" width="25" height="25" viewBox="0 0 25 25"><path d="M12.500 4.500L18.500 8L12.500 11.500L6.500 8zM6.500 12L12.500 15.500L18.500 12" fill="none" stroke="#dcdcdc" stroke-width="1.100"/><path d="M5.500 15.500L12.500 19.500L19.500 15.500L12.500 21.500z" fill="#dcdcdc" stroke="#dcdcdc" stroke-width="1"/></svg></div>
<div class="t" style="left:11px;top:328px">换色</div><div class="btn" style="left:47px;top:323.300px;width:101px;height:25px"></div><div class="t" style="left:47px;top:328px;width:101px;text-align:center;color:#e4e4e4">换色编辑器</div>
<div class="hdr" style="top:359.500px;height:26px"></div><svg style="left:13.500px;top:370.5px" width="8" height="4" viewBox="0 0 8 4"><path d="M0 0H8L4 4z" fill="#d8d8d8"/></svg><div class="t" style="left:32px;top:364.500px;color:#e4e4e4">填充&amp;边框</div>
<div class="t" style="left:11px;top:400px">填充</div>
<div class="abs" style="left:47.300px;top:395px;width:90px;height:26px;background:#2e2e2e;border:1px solid #555"></div>
<div class="abs" style="left:50.500px;top:400.500px;width:14.500px;height:14.500px;background:#c0c0c0;border:1px solid #111"></div>
<div class="t" style="left:66.500px;top:400px;font-size:11.500px;color:#cfcfcf">C0C0C0</div>
<div class="abs" style="left:112.700px;top:396px;width:23.600px;height:24px;background:#5c5c5c"><svg style="left:1px;top:2px" width="21" height="20" viewBox="0 0 21 20"><path d="M13.200 3.200a2 2 0 0 1 2.800 2.800l-1.800 1.800l0.700 0.700l-1 1l-0.700-0.700l-5.200 5.200c-0.800 0.800-1.800 0.300-2.500 1l-0.800-0.800c0.700-0.700 0.200-1.700 1-2.500l5.200-5.200l-0.700-0.700l1-1l0.700 0.700z" fill="#e4e4e4"/><path d="M11.300 8.200L7.200 12.300" stroke="#5a5a5a" stroke-width="1.400"/></svg></div>
<div class="t" style="left:11px;top:436px">描边</div>
<div class="abs" style="left:47.300px;top:431.500px;width:90px;height:26px;background:#2e2e2e;border:1px solid #555"></div>
<svg style="left:50.200px;top:437.300px" width="60" height="15" viewBox="0 0 60 15"><rect x="0.500" y="0.500" width="59" height="14" fill="#fff" stroke="#111"/><path d="M1 14L59 1" stroke="#f02020" stroke-width="1"/></svg>
<div class="abs" style="left:112.700px;top:432.500px;width:23.600px;height:24px;background:#5c5c5c"><svg style="left:1px;top:2px" width="21" height="20" viewBox="0 0 21 20"><path d="M13.200 3.200a2 2 0 0 1 2.800 2.800l-1.800 1.800l0.700 0.700l-1 1l-0.700-0.700l-5.200 5.200c-0.800 0.800-1.800 0.300-2.500 1l-0.800-0.800c0.700-0.700 0.200-1.700 1-2.500l5.200-5.200l-0.700-0.700l1-1l0.700 0.700z" fill="#e4e4e4"/><path d="M11.300 8.200L7.200 12.300" stroke="#5a5a5a" stroke-width="1.400"/></svg></div>
<div class="abs" style="left:142.400px;top:431.500px;width:62px;height:26px;background:#2e2e2e;border:1px solid #4c4c4c"></div>
<svg style="left:147px;top:436px" width="8" height="17" viewBox="0 0 8 17"><path d="M1 5L4 2L7 5M1 12L4 15L7 12" fill="none" stroke="#d0d0d0" stroke-width="1.400"/></svg>
<div class="t" style="left:162px;top:436.500px;font-size:13px">0</div>
<svg style="left:193px;top:441px" width="8" height="6" viewBox="0 0 8 6"><path d="M1 1L4 4.200L7 1" fill="none" stroke="#d0d0d0" stroke-width="1.500"/></svg>
<div class="btn" style="left:209px;top:431.500px;width:26px;height:25.500px"><svg style="left:4px;top:10px" width="16" height="4" viewBox="0 0 16 4"><circle cx="2" cy="2" r="1.700" fill="#d0d0d0"/><circle cx="8" cy="2" r="1.700" fill="#d0d0d0"/><circle cx="14" cy="2" r="1.700" fill="#d0d0d0"/></svg></div>
<div class="t" style="left:11px;top:473px">透明</div>
<div class="abs" style="left:170px;top:473px;width:12px;height:12px;border-radius:6px;background:#e6e6e6"></div>
<div class="inp" style="left:187.500px;top:467.500px;width:48px;height:26px;line-height:23px;font-size:12px">100%</div>
<div class="t" style="left:11px;top:508px;color:#e0e0e0">虚线</div>
<div class="abs" style="left:47.300px;top:506.500px;width:31.500px;height:16.500px;border-radius:9px;background:#cfcfcf"></div><div class="abs" style="left:48.300px;top:507.500px;width:14.500px;height:14.500px;border-radius:8px;background:#fff"></div>
</div>
<div id="timeline" class="abs">
<div class="abs" style="left:19px;top:20px;width:71px;height:71px;background:#2a2a2a;border:1px solid #1a73e8;border-radius:4px;overflow:hidden"><svg style="left:-1px;top:-1px" width="71" height="71" viewBox="0 0 71 71"><defs><clipPath id="fc"><rect x="4.900" y="4.400" width="60" height="60"/></clipPath></defs><g clip-path="url(#fc)"><use href="#art" transform="translate(-21.030,-1.980) scale(0.1)"/></g></svg><div class="abs" style="left:-1px;top:-1px;width:17.500px;height:18px;background:#1a73e8;border-radius:3px"></div><div class="t" style="left:3.500px;top:0.500px;font-size:10px;color:#8fb8f2">1</div></div>
<div class="abs" style="left:20.500px;top:94.500px;width:67.500px;height:24.500px;background:#333;border-radius:4px"></div>
<div class="t" style="left:26px;top:99.500px;color:#dcdcdc;font-size:12.500px">0.1s</div>
<svg style="left:73.500px;top:99.500px" width="8" height="17" viewBox="0 0 8 17"><path d="M0.800 5L4 1.800L7.200 5M0.800 12L4 15.200L7.200 12" fill="none" stroke="#d0d0d0" stroke-width="1.300"/></svg>
<div class="abs" style="left:12px;top:124.700px;width:968px;height:8px;background:#4d4d4d"></div>
<div class="abs" style="left:995.500px;top:15.500px;width:69px;height:99px;border:1px solid #2a2a2a;border-radius:3px"></div>
<svg style="left:1006px;top:58px" width="14" height="14" viewBox="0 0 14 14"><path d="M7 0V14M0 7H14" stroke="#e6e6e6" stroke-width="1.600"/></svg>
<div class="t bb" style="left:1027px;top:57.500px;color:#d6d6d6">新建</div>
</div>
<div id="bottombar" class="abs">
<svg style="left:18.500px;top:15.500px" width="15" height="12" viewBox="0 0 15 12"><path d="M6 0L0 4.500L6 9V6.300C10 6.300 12.500 8 14.500 11.500C14 6.500 11 3.200 6 2.800z" fill="#8a8a8a"/></svg>
<div class="t bb" style="left:41px;top:12px;color:#8a8a8a">撤销</div>
<svg style="left:90.500px;top:15.500px" width="15" height="12" viewBox="0 0 15 12"><path d="M9 0L15 4.500L9 9V6.300C5 6.300 2.500 8 0.500 11.500C1 6.500 4 3.200 9 2.800z" fill="#8a8a8a"/></svg>
<div class="t bb" style="left:113px;top:12px;color:#8a8a8a">恢复</div>
<div class="abs" style="left:156.500px;top:6px;width:53.500px;height:27.500px;background:#3a3a3a;border:1px solid #484848;border-radius:3px"></div>
<svg style="left:160px;top:13px" width="13" height="14" viewBox="0 0 13 14"><path d="M6.500 0L12.600 3.500V10.500L6.500 14L0.400 10.500V3.500z" fill="#e6e6e6"/><circle cx="6.500" cy="7" r="2.600" fill="#3a3a3a"/></svg>
<div class="t bb" style="left:179px;top:12px;color:#f0f0f0">设置</div>
<svg style="left:230px;top:13px" width="15" height="14" viewBox="0 0 15 14"><path d="M11.500 0.300L14.300 3.100L11 6.400L8.200 3.600z" fill="#e0e0e0"/><path d="M7.300 2.700L12 7.400L6.600 13.600L4.600 11.600L6.300 9.300L3.500 10.500L0.400 7.400z" fill="#e0e0e0"/></svg>
<div class="t bb" style="left:250.500px;top:12px;color:#e6e6e6">清空</div>
<div class="abs" style="left:298.500px;top:6px;width:85px;height:27.500px;background:#3a3a3a;border:1px solid #484848;border-radius:3px"></div>
<svg style="left:302px;top:13px" width="18" height="15" viewBox="0 0 18 15"><path d="M1.200 13V1.200H6.300L7.800 3H14.500V5.500" fill="none" stroke="#f0f0f0" stroke-width="2" stroke-linejoin="round"/><path d="M3.500 6.300H16.800L15 13.800H1.600z" fill="none" stroke="#f0f0f0" stroke-width="2" stroke-linejoin="round"/></svg>
<div class="t bb" style="left:327px;top:12px;color:#f0f0f0;letter-spacing:.7px">打开文件</div>
<svg style="left:481px;top:12px" width="13" height="15" viewBox="0 0 13 15"><rect x="0" y="0.500" width="1" height="14" fill="#7c7c7c"/><path d="M12 1L2 7.500L12 14z" fill="#7c7c7c"/></svg>
<svg style="left:532.500px;top:11px" width="13" height="17" viewBox="0 0 13 17"><path d="M1.500 1.500L11.800 8.500L1.500 15.500z" fill="#cacaca" stroke="#cacaca" stroke-width="2" stroke-linejoin="round"/></svg>
<svg style="left:584.500px;top:12px" width="13" height="15" viewBox="0 0 13 15"><rect x="11.800" y="0.500" width="1" height="14" fill="#7c7c7c"/><path d="M0.500 1L10.500 7.500L0.500 14z" fill="#7c7c7c"/></svg>
<div class="t" style="left:780px;top:11px;width:113.500px;text-align:right;color:#fff;font-size:12.500px">00:00/00:00.1</div>
<div class="abs" style="left:901px;top:4px;width:82px;height:30px;border-radius:15px;background:#444"></div>
<div class="t" style="left:901px;top:11.500px;width:82px;text-align:center;color:#fff;font-weight:500">保存</div>
<div class="abs" style="left:988px;top:4px;width:82px;height:30px;border-radius:15px;background:#1a73e8"></div>
<div class="t" style="left:988px;top:11.500px;width:82px;text-align:center;color:#fff;font-weight:500">发布</div>
</div>
</body>
</html>
